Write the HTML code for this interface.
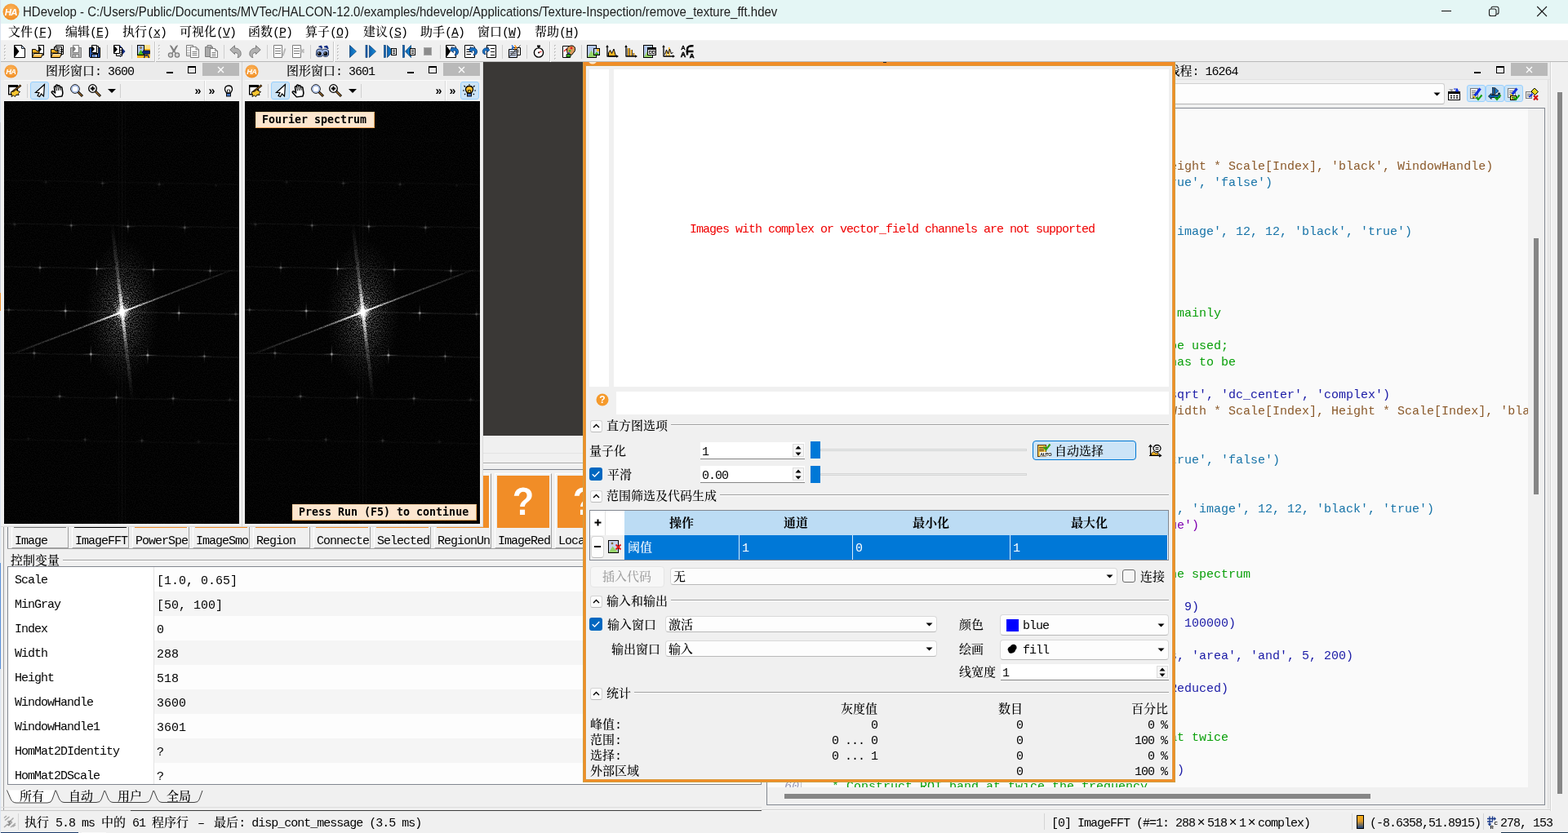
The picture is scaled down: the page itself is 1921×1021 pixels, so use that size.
<!DOCTYPE html>
<html lang="zh-CN"><head><meta charset="utf-8"><title>HDevelop</title>
<style>
html,body{margin:0;padding:0;background:#f0f0f0;overflow:hidden}
#root{will-change:transform;position:relative;width:1921px;height:1021px;overflow:hidden;background:#f0f0f0;color:#000}
#root div,#root svg{position:absolute;box-sizing:border-box}
#root span{position:static}
.u{font:500 15px/20px "Liberation Mono","Noto Serif CJK SC",serif;white-space:pre}
.l{letter-spacing:-1px}
.k{font:15px/20px "Liberation Mono",monospace;white-space:pre}
.t{font:15px/20px "Liberation Sans",sans-serif;white-space:pre}
.o{font:bold 13.3px/20px "DejaVu Sans Mono",monospace;white-space:pre}
.i{overflow:visible}
.x{display:inline-block;width:15px;text-align:center;font-size:17px;line-height:15px}
.x2{display:inline-block;width:9px;text-align:center;font-weight:bold;font-size:14px}
.x3{display:inline-block;width:15px;text-align:center}
</style></head>
<body>
<div id="root">
<svg width="0" height="0" style="left:0;top:0"><defs><filter id="nz" x="0" y="0" width="100%" height="100%" color-interpolation-filters="sRGB"><feTurbulence type="fractalNoise" baseFrequency="0.75" numOctaves="1" seed="7"/><feColorMatrix type="matrix" values="0 0 0 0 1  0 0 0 0 1  0 0 0 0 1  5 0 0 0 -2.1"/></filter><filter id="sp" x="-5%" y="-5%" width="110%" height="110%" color-interpolation-filters="sRGB"><feTurbulence type="fractalNoise" baseFrequency="0.85" numOctaves="1" seed="11" result="n"/><feColorMatrix in="n" type="matrix" values="0 0 0 0 1  0 0 0 0 1  0 0 0 0 1  4 0 0 0 -1.1" result="m"/><feComposite in="SourceGraphic" in2="m" operator="in"/></filter><radialGradient id="fg1" cx="144.7" cy="258.4" r="60" gradientUnits="userSpaceOnUse" gradientTransform="translate(144.7 258.4) scale(0.75 1.5) translate(-144.7 -258.4)"><stop offset="0" stop-color="#fff" stop-opacity="1"/><stop offset="0.1" stop-color="#fff" stop-opacity="0.7"/><stop offset="0.3" stop-color="#fff" stop-opacity="0.3"/><stop offset="0.7" stop-color="#fff" stop-opacity="0.11"/><stop offset="1" stop-color="#fff" stop-opacity="0.03"/></radialGradient><mask id="fm" maskUnits="userSpaceOnUse" x="0" y="0" width="288" height="518"><rect width="288" height="518" fill="url(#fg1)"/></mask><radialGradient id="fc"><stop offset="0" stop-color="#fff" stop-opacity="1"/><stop offset="0.35" stop-color="#fff" stop-opacity="0.75"/><stop offset="1" stop-color="#fff" stop-opacity="0"/></radialGradient><radialGradient id="fp"><stop offset="0" stop-color="#fff" stop-opacity="1"/><stop offset="0.3" stop-color="#fff" stop-opacity="0.5"/><stop offset="1" stop-color="#fff" stop-opacity="0"/></radialGradient><linearGradient id="fl" x1="0" x2="1" y1="0" y2="0"><stop offset="0" stop-color="#fff" stop-opacity="0"/><stop offset="0.3" stop-color="#fff" stop-opacity="0.25"/><stop offset="0.42" stop-color="#fff" stop-opacity="0.7"/><stop offset="0.5" stop-color="#fff" stop-opacity="1"/><stop offset="0.58" stop-color="#fff" stop-opacity="0.7"/><stop offset="0.7" stop-color="#fff" stop-opacity="0.25"/><stop offset="1" stop-color="#fff" stop-opacity="0"/></linearGradient><linearGradient id="fv" x1="0" x2="1" y1="0" y2="0"><stop offset="0" stop-color="#fff" stop-opacity="0"/><stop offset="0.5" stop-color="#fff" stop-opacity="1"/><stop offset="1" stop-color="#fff" stop-opacity="0"/></linearGradient><linearGradient id="fd" x1="0" x2="1" y1="0" y2="0"><stop offset="0" stop-color="#fff" stop-opacity="0"/><stop offset="0.08" stop-color="#fff" stop-opacity="0.1"/><stop offset="0.3" stop-color="#fff" stop-opacity="0.22"/><stop offset="0.4" stop-color="#fff" stop-opacity="0.5"/><stop offset="0.47" stop-color="#fff" stop-opacity="1"/><stop offset="0.53" stop-color="#fff" stop-opacity="1"/><stop offset="0.6" stop-color="#fff" stop-opacity="0.5"/><stop offset="0.7" stop-color="#fff" stop-opacity="0.22"/><stop offset="0.92" stop-color="#fff" stop-opacity="0.1"/><stop offset="1" stop-color="#fff" stop-opacity="0"/></linearGradient><g id="fftimg"><rect width="288" height="518" fill="#000"/><rect x="144.2" y="0" width="1" height="518" fill="#fff" opacity="0.05"/><rect x="140.2" y="0" width="1" height="518" fill="#fff" opacity="0.03"/><rect x="148.2" y="0" width="1" height="518" fill="#fff" opacity="0.03"/><rect width="288" height="518" fill="#fff" filter="url(#nz)" mask="url(#fm)"/><g filter="url(#sp)" opacity="0.009"><rect x="0" y="469.6" width="288" height="1.6" fill="#fff" transform="rotate(1.07 144.7 470.4)"/></g><g filter="url(#sp)" opacity="0.028"><rect x="0" y="416.6" width="288" height="1.6" fill="#fff" transform="rotate(1.07 144.7 417.4)"/></g><g filter="url(#sp)" opacity="0.046"><rect x="0" y="363.6" width="288" height="1.6" fill="#fff" transform="rotate(1.07 144.7 364.4)"/></g><g filter="url(#sp)" opacity="0.064"><rect x="0" y="310.6" width="288" height="1.6" fill="#fff" transform="rotate(1.07 144.7 311.4)"/></g><g filter="url(#sp)" opacity="0.083"><rect x="0" y="257.6" width="288" height="1.6" fill="#fff" transform="rotate(1.07 144.7 258.4)"/></g><g filter="url(#sp)" opacity="0.064"><rect x="0" y="204.6" width="288" height="1.6" fill="#fff" transform="rotate(1.07 144.7 205.4)"/></g><g filter="url(#sp)" opacity="0.046"><rect x="0" y="151.6" width="288" height="1.6" fill="#fff" transform="rotate(1.07 144.7 152.4)"/></g><g filter="url(#sp)" opacity="0.028"><rect x="0" y="98.6" width="288" height="1.6" fill="#fff" transform="rotate(1.07 144.7 99.4)"/></g><g filter="url(#sp)" opacity="0.009"><rect x="0" y="45.6" width="288" height="1.6" fill="#fff" transform="rotate(1.07 144.7 46.4)"/></g><g opacity="0.07" transform="translate(29.8 413.5)"><rect x="-6.7" y="-0.6" width="13.4" height="1.2" fill="url(#fv)" opacity="0.3"/><rect x="-0.6" y="0.0" width="1.2" height="0.0" fill="url(#fv)" opacity="0.55" transform="rotate(90) translate(0 0)"/><g transform="rotate(90)"><rect x="-6.0" y="-0.6" width="12.0" height="1.2" fill="url(#fv)" opacity="0.3"/></g><circle r="2.4" fill="url(#fp)"/></g><g opacity="0.14" transform="translate(-1.4 360.5)"><rect x="-7.3" y="-0.6" width="14.6" height="1.2" fill="url(#fv)" opacity="0.3"/><rect x="-0.6" y="0.0" width="1.2" height="0.0" fill="url(#fv)" opacity="0.55" transform="rotate(90) translate(0 0)"/><g transform="rotate(90)"><rect x="-6.6" y="-0.6" width="13.2" height="1.2" fill="url(#fv)" opacity="0.3"/></g><circle r="2.4" fill="url(#fp)"/></g><g opacity="0.21" transform="translate(99.3 414.8)"><rect x="-8.0" y="-0.6" width="16.1" height="1.2" fill="url(#fv)" opacity="0.3"/><rect x="-0.6" y="0.0" width="1.2" height="0.0" fill="url(#fv)" opacity="0.55" transform="rotate(90) translate(0 0)"/><g transform="rotate(90)"><rect x="-7.2" y="-0.6" width="14.5" height="1.2" fill="url(#fv)" opacity="0.3"/></g><circle r="2.4" fill="url(#fp)"/></g><g opacity="0.40" transform="translate(68.1 361.8)"><rect x="-9.8" y="-0.6" width="19.7" height="1.2" fill="url(#fv)" opacity="0.3"/><rect x="-0.6" y="0.0" width="1.2" height="0.0" fill="url(#fv)" opacity="0.55" transform="rotate(90) translate(0 0)"/><g transform="rotate(90)"><rect x="-8.9" y="-0.6" width="17.7" height="1.2" fill="url(#fv)" opacity="0.3"/></g><circle r="2.4" fill="url(#fp)"/></g><g opacity="0.46" transform="translate(36.9 308.8)"><rect x="-10.4" y="-0.6" width="20.8" height="1.2" fill="url(#fv)" opacity="0.3"/><rect x="-0.6" y="0.0" width="1.2" height="0.0" fill="url(#fv)" opacity="0.55" transform="rotate(90) translate(0 0)"/><g transform="rotate(90)"><rect x="-9.3" y="-0.6" width="18.7" height="1.2" fill="url(#fv)" opacity="0.3"/></g><circle r="2.4" fill="url(#fp)"/></g><g opacity="0.34" transform="translate(5.7 255.8)"><rect x="-9.3" y="-0.6" width="18.5" height="1.2" fill="url(#fv)" opacity="0.3"/><rect x="-0.6" y="0.0" width="1.2" height="0.0" fill="url(#fv)" opacity="0.55" transform="rotate(90) translate(0 0)"/><g transform="rotate(90)"><rect x="-8.3" y="-0.6" width="16.7" height="1.2" fill="url(#fv)" opacity="0.3"/></g><circle r="2.4" fill="url(#fp)"/></g><g opacity="0.23" transform="translate(168.8 416.1)"><rect x="-8.2" y="-0.6" width="16.4" height="1.2" fill="url(#fv)" opacity="0.3"/><rect x="-0.6" y="0.0" width="1.2" height="0.0" fill="url(#fv)" opacity="0.55" transform="rotate(90) translate(0 0)"/><g transform="rotate(90)"><rect x="-7.4" y="-0.6" width="14.8" height="1.2" fill="url(#fv)" opacity="0.3"/></g><circle r="2.4" fill="url(#fp)"/></g><g opacity="0.54" transform="translate(137.6 363.1)"><rect x="-11.2" y="-0.6" width="22.4" height="1.2" fill="url(#fv)" opacity="0.3"/><rect x="-0.6" y="0.0" width="1.2" height="0.0" fill="url(#fv)" opacity="0.55" transform="rotate(90) translate(0 0)"/><g transform="rotate(90)"><rect x="-10.1" y="-0.6" width="20.2" height="1.2" fill="url(#fv)" opacity="0.3"/></g><circle r="2.4" fill="url(#fp)"/></g><g opacity="0.80" transform="translate(106.4 310.1)"><rect x="-13.7" y="-0.6" width="27.4" height="1.2" fill="url(#fv)" opacity="0.3"/><rect x="-0.6" y="0.0" width="1.2" height="0.0" fill="url(#fv)" opacity="0.55" transform="rotate(90) translate(0 0)"/><g transform="rotate(90)"><rect x="-12.3" y="-0.6" width="24.6" height="1.2" fill="url(#fv)" opacity="0.3"/></g><circle r="2.4" fill="url(#fp)"/></g><g opacity="0.77" transform="translate(75.2 257.1)"><rect x="-13.4" y="-0.6" width="26.7" height="1.2" fill="url(#fv)" opacity="0.3"/><rect x="-0.6" y="0.0" width="1.2" height="0.0" fill="url(#fv)" opacity="0.55" transform="rotate(90) translate(0 0)"/><g transform="rotate(90)"><rect x="-12.0" y="-0.6" width="24.1" height="1.2" fill="url(#fv)" opacity="0.3"/></g><circle r="2.4" fill="url(#fp)"/></g><g opacity="0.48" transform="translate(44.0 204.1)"><rect x="-10.6" y="-0.6" width="21.3" height="1.2" fill="url(#fv)" opacity="0.3"/><rect x="-0.6" y="0.0" width="1.2" height="0.0" fill="url(#fv)" opacity="0.55" transform="rotate(90) translate(0 0)"/><g transform="rotate(90)"><rect x="-9.6" y="-0.6" width="19.2" height="1.2" fill="url(#fv)" opacity="0.3"/></g><circle r="2.4" fill="url(#fp)"/></g><g opacity="0.18" transform="translate(12.8 151.1)"><rect x="-7.7" y="-0.6" width="15.4" height="1.2" fill="url(#fv)" opacity="0.3"/><rect x="-0.6" y="0.0" width="1.2" height="0.0" fill="url(#fv)" opacity="0.55" transform="rotate(90) translate(0 0)"/><g transform="rotate(90)"><rect x="-6.9" y="-0.6" width="13.9" height="1.2" fill="url(#fv)" opacity="0.3"/></g><circle r="2.4" fill="url(#fp)"/></g><g opacity="0.11" transform="translate(238.3 417.4)"><rect x="-7.0" y="-0.6" width="14.1" height="1.2" fill="url(#fv)" opacity="0.3"/><rect x="-0.6" y="0.0" width="1.2" height="0.0" fill="url(#fv)" opacity="0.55" transform="rotate(90) translate(0 0)"/><g transform="rotate(90)"><rect x="-6.3" y="-0.6" width="12.7" height="1.2" fill="url(#fv)" opacity="0.3"/></g><circle r="2.4" fill="url(#fp)"/></g><g opacity="0.43" transform="translate(207.1 364.4)"><rect x="-10.2" y="-0.6" width="20.3" height="1.2" fill="url(#fv)" opacity="0.3"/><rect x="-0.6" y="0.0" width="1.2" height="0.0" fill="url(#fv)" opacity="0.55" transform="rotate(90) translate(0 0)"/><g transform="rotate(90)"><rect x="-9.1" y="-0.6" width="18.3" height="1.2" fill="url(#fv)" opacity="0.3"/></g><circle r="2.4" fill="url(#fp)"/></g><g opacity="0.82" transform="translate(175.9 311.4)"><rect x="-13.9" y="-0.6" width="27.8" height="1.2" fill="url(#fv)" opacity="0.3"/><rect x="-0.6" y="0.0" width="1.2" height="0.0" fill="url(#fv)" opacity="0.55" transform="rotate(90) translate(0 0)"/><g transform="rotate(90)"><rect x="-12.5" y="-0.6" width="25.0" height="1.2" fill="url(#fv)" opacity="0.3"/></g><circle r="2.4" fill="url(#fp)"/></g><g opacity="0.82" transform="translate(113.5 205.4)"><rect x="-13.9" y="-0.6" width="27.8" height="1.2" fill="url(#fv)" opacity="0.3"/><rect x="-0.6" y="0.0" width="1.2" height="0.0" fill="url(#fv)" opacity="0.55" transform="rotate(90) translate(0 0)"/><g transform="rotate(90)"><rect x="-12.5" y="-0.6" width="25.0" height="1.2" fill="url(#fv)" opacity="0.3"/></g><circle r="2.4" fill="url(#fp)"/></g><g opacity="0.43" transform="translate(82.3 152.4)"><rect x="-10.2" y="-0.6" width="20.3" height="1.2" fill="url(#fv)" opacity="0.3"/><rect x="-0.6" y="0.0" width="1.2" height="0.0" fill="url(#fv)" opacity="0.55" transform="rotate(90) translate(0 0)"/><g transform="rotate(90)"><rect x="-9.1" y="-0.6" width="18.3" height="1.2" fill="url(#fv)" opacity="0.3"/></g><circle r="2.4" fill="url(#fp)"/></g><g opacity="0.11" transform="translate(51.1 99.4)"><rect x="-7.0" y="-0.6" width="14.1" height="1.2" fill="url(#fv)" opacity="0.3"/><rect x="-0.6" y="0.0" width="1.2" height="0.0" fill="url(#fv)" opacity="0.55" transform="rotate(90) translate(0 0)"/><g transform="rotate(90)"><rect x="-6.3" y="-0.6" width="12.7" height="1.2" fill="url(#fv)" opacity="0.3"/></g><circle r="2.4" fill="url(#fp)"/></g><g opacity="0.18" transform="translate(276.6 365.7)"><rect x="-7.7" y="-0.6" width="15.4" height="1.2" fill="url(#fv)" opacity="0.3"/><rect x="-0.6" y="0.0" width="1.2" height="0.0" fill="url(#fv)" opacity="0.55" transform="rotate(90) translate(0 0)"/><g transform="rotate(90)"><rect x="-6.9" y="-0.6" width="13.9" height="1.2" fill="url(#fv)" opacity="0.3"/></g><circle r="2.4" fill="url(#fp)"/></g><g opacity="0.48" transform="translate(245.4 312.7)"><rect x="-10.6" y="-0.6" width="21.3" height="1.2" fill="url(#fv)" opacity="0.3"/><rect x="-0.6" y="0.0" width="1.2" height="0.0" fill="url(#fv)" opacity="0.55" transform="rotate(90) translate(0 0)"/><g transform="rotate(90)"><rect x="-9.6" y="-0.6" width="19.2" height="1.2" fill="url(#fv)" opacity="0.3"/></g><circle r="2.4" fill="url(#fp)"/></g><g opacity="0.77" transform="translate(214.2 259.7)"><rect x="-13.4" y="-0.6" width="26.7" height="1.2" fill="url(#fv)" opacity="0.3"/><rect x="-0.6" y="0.0" width="1.2" height="0.0" fill="url(#fv)" opacity="0.55" transform="rotate(90) translate(0 0)"/><g transform="rotate(90)"><rect x="-12.0" y="-0.6" width="24.1" height="1.2" fill="url(#fv)" opacity="0.3"/></g><circle r="2.4" fill="url(#fp)"/></g><g opacity="0.80" transform="translate(183.0 206.7)"><rect x="-13.7" y="-0.6" width="27.4" height="1.2" fill="url(#fv)" opacity="0.3"/><rect x="-0.6" y="0.0" width="1.2" height="0.0" fill="url(#fv)" opacity="0.55" transform="rotate(90) translate(0 0)"/><g transform="rotate(90)"><rect x="-12.3" y="-0.6" width="24.6" height="1.2" fill="url(#fv)" opacity="0.3"/></g><circle r="2.4" fill="url(#fp)"/></g><g opacity="0.54" transform="translate(151.8 153.7)"><rect x="-11.2" y="-0.6" width="22.4" height="1.2" fill="url(#fv)" opacity="0.3"/><rect x="-0.6" y="0.0" width="1.2" height="0.0" fill="url(#fv)" opacity="0.55" transform="rotate(90) translate(0 0)"/><g transform="rotate(90)"><rect x="-10.1" y="-0.6" width="20.2" height="1.2" fill="url(#fv)" opacity="0.3"/></g><circle r="2.4" fill="url(#fp)"/></g><g opacity="0.23" transform="translate(120.6 100.7)"><rect x="-8.2" y="-0.6" width="16.4" height="1.2" fill="url(#fv)" opacity="0.3"/><rect x="-0.6" y="0.0" width="1.2" height="0.0" fill="url(#fv)" opacity="0.55" transform="rotate(90) translate(0 0)"/><g transform="rotate(90)"><rect x="-7.4" y="-0.6" width="14.8" height="1.2" fill="url(#fv)" opacity="0.3"/></g><circle r="2.4" fill="url(#fp)"/></g><g opacity="0.34" transform="translate(283.7 261.0)"><rect x="-9.3" y="-0.6" width="18.5" height="1.2" fill="url(#fv)" opacity="0.3"/><rect x="-0.6" y="0.0" width="1.2" height="0.0" fill="url(#fv)" opacity="0.55" transform="rotate(90) translate(0 0)"/><g transform="rotate(90)"><rect x="-8.3" y="-0.6" width="16.7" height="1.2" fill="url(#fv)" opacity="0.3"/></g><circle r="2.4" fill="url(#fp)"/></g><g opacity="0.46" transform="translate(252.5 208.0)"><rect x="-10.4" y="-0.6" width="20.8" height="1.2" fill="url(#fv)" opacity="0.3"/><rect x="-0.6" y="0.0" width="1.2" height="0.0" fill="url(#fv)" opacity="0.55" transform="rotate(90) translate(0 0)"/><g transform="rotate(90)"><rect x="-9.3" y="-0.6" width="18.7" height="1.2" fill="url(#fv)" opacity="0.3"/></g><circle r="2.4" fill="url(#fp)"/></g><g opacity="0.40" transform="translate(221.3 155.0)"><rect x="-9.8" y="-0.6" width="19.7" height="1.2" fill="url(#fv)" opacity="0.3"/><rect x="-0.6" y="0.0" width="1.2" height="0.0" fill="url(#fv)" opacity="0.55" transform="rotate(90) translate(0 0)"/><g transform="rotate(90)"><rect x="-8.9" y="-0.6" width="17.7" height="1.2" fill="url(#fv)" opacity="0.3"/></g><circle r="2.4" fill="url(#fp)"/></g><g opacity="0.21" transform="translate(190.1 102.0)"><rect x="-8.0" y="-0.6" width="16.1" height="1.2" fill="url(#fv)" opacity="0.3"/><rect x="-0.6" y="0.0" width="1.2" height="0.0" fill="url(#fv)" opacity="0.55" transform="rotate(90) translate(0 0)"/><g transform="rotate(90)"><rect x="-7.2" y="-0.6" width="14.5" height="1.2" fill="url(#fv)" opacity="0.3"/></g><circle r="2.4" fill="url(#fp)"/></g><g opacity="0.14" transform="translate(290.8 156.3)"><rect x="-7.3" y="-0.6" width="14.6" height="1.2" fill="url(#fv)" opacity="0.3"/><rect x="-0.6" y="0.0" width="1.2" height="0.0" fill="url(#fv)" opacity="0.55" transform="rotate(90) translate(0 0)"/><g transform="rotate(90)"><rect x="-6.6" y="-0.6" width="13.2" height="1.2" fill="url(#fv)" opacity="0.3"/></g><circle r="2.4" fill="url(#fp)"/></g><g opacity="0.07" transform="translate(259.6 103.3)"><rect x="-6.7" y="-0.6" width="13.4" height="1.2" fill="url(#fv)" opacity="0.3"/><rect x="-0.6" y="0.0" width="1.2" height="0.0" fill="url(#fv)" opacity="0.55" transform="rotate(90) translate(0 0)"/><g transform="rotate(90)"><rect x="-6.0" y="-0.6" width="12.0" height="1.2" fill="url(#fv)" opacity="0.3"/></g><circle r="2.4" fill="url(#fp)"/></g><g filter="url(#sp)"><g transform="translate(144.7 258.4) rotate(83.44)"><rect x="-110" y="-2" width="220" height="4" fill="url(#fl)"/></g></g><g transform="translate(144.7 258.4) rotate(83.44)"><rect x="-45" y="-0.9" width="90" height="1.8" fill="url(#fl)" opacity="0.9"/></g><g filter="url(#sp)"><g transform="translate(144.7 258.4) rotate(-20.96)"><rect x="-150" y="-1" width="300" height="2" fill="url(#fd)"/></g></g><g transform="translate(144.7 258.4) rotate(-20.96)"><rect x="-150" y="-0.5" width="300" height="1" fill="url(#fd)" opacity="0.5"/><rect x="-40" y="-0.9" width="80" height="1.8" fill="url(#fl)" opacity="0.8"/></g><circle cx="144.7" cy="258.4" r="9" fill="url(#fc)"/><ellipse cx="144.7" cy="258.4" rx="3" ry="4" fill="#fff"/></g></defs></svg>
<div style="left:0px;top:0px;width:1921px;height:29px;background:#e4f6f5;"></div>
<svg style="left:3px;top:3.5px" width="21" height="21" viewBox="0 0 21 21"><defs><radialGradient id="hag" cx="0.5" cy="0.35" r="0.7"><stop offset="0" stop-color="#fbb45c"/><stop offset="1" stop-color="#f08a1e"/></radialGradient></defs><circle cx="10.5" cy="10.5" r="10" fill="url(#hag)"/><text x="10.3" y="14.6" font-family="Liberation Sans,sans-serif" font-size="11.5" font-weight="bold" font-style="italic" fill="#fff" text-anchor="middle" letter-spacing="-0.8">HA</text></svg>
<div class="t" style="top:5px;left:28px;color:#1b1b1b;transform:scaleY(1.07);transform-origin:0 15px;">HDevelop - C:/Users/Public/Documents/MVTec/HALCON-12.0/examples/hdevelop/Applications/Texture-Inspection/remove_texture_fft.hdev</div>
<svg style="left:1760px;top:0" width="161" height="29" viewBox="0 0 161 29" fill="none" stroke="#1a1a1a" stroke-width="1.1"><path d="M6 13.5h12"/><rect x="64.5" y="11" width="8.5" height="8.5" rx="2"/><path d="M67 10.500v-0.200a2 2 0 0 1 2-2h4.800a2.200 2.200 0 0 1 2.200 2.200v4.800a2 2 0 0 1-2 2h-0.500"/><path d="M123.200 8l11.800 12M135 8l-11.800 12"/></svg>
<div style="left:0px;top:29px;width:1921px;height:21px;background:#ffffff;"></div>
<div style="left:0px;top:49px;width:1921px;height:1px;background:#f4f4f4;"></div>
<div class="u" style="top:31px;left:10px;">文件<span class="l">(F)</span></div>
<div style="left:48px;top:45px;width:8px;height:1px;background:#000;"></div>
<div class="u" style="top:31px;left:80px;">编辑<span class="l">(E)</span></div>
<div style="left:118px;top:45px;width:8px;height:1px;background:#000;"></div>
<div class="u" style="top:31px;left:150px;">执行<span class="l">(x)</span></div>
<div style="left:188px;top:45px;width:8px;height:1px;background:#000;"></div>
<div class="u" style="top:31px;left:220px;">可视化<span class="l">(V)</span></div>
<div style="left:273px;top:45px;width:8px;height:1px;background:#000;"></div>
<div class="u" style="top:31px;left:304px;">函数<span class="l">(P)</span></div>
<div style="left:342px;top:45px;width:8px;height:1px;background:#000;"></div>
<div class="u" style="top:31px;left:374px;">算子<span class="l">(O)</span></div>
<div style="left:412px;top:45px;width:8px;height:1px;background:#000;"></div>
<div class="u" style="top:31px;left:445px;">建议<span class="l">(S)</span></div>
<div style="left:483px;top:45px;width:8px;height:1px;background:#000;"></div>
<div class="u" style="top:31px;left:515px;">助手<span class="l">(A)</span></div>
<div style="left:553px;top:45px;width:8px;height:1px;background:#000;"></div>
<div class="u" style="top:31px;left:585px;">窗口<span class="l">(W)</span></div>
<div style="left:623px;top:45px;width:8px;height:1px;background:#000;"></div>
<div class="u" style="top:31px;left:655px;">帮助<span class="l">(H)</span></div>
<div style="left:693px;top:45px;width:8px;height:1px;background:#000;"></div>
<div style="left:0px;top:50px;width:1921px;height:26px;background:#f0f0f0;"></div>
<div style="left:0px;top:75px;width:1921px;height:1px;background:#b9b9b9;"></div>
<div style="left:5px;top:55px;width:2px;height:2px;background:#c3c3c3;"></div>
<div style="left:6px;top:56px;width:1px;height:1px;background:#fff;"></div>
<div style="left:5px;top:59px;width:2px;height:2px;background:#c3c3c3;"></div>
<div style="left:6px;top:60px;width:1px;height:1px;background:#fff;"></div>
<div style="left:5px;top:63px;width:2px;height:2px;background:#c3c3c3;"></div>
<div style="left:6px;top:64px;width:1px;height:1px;background:#fff;"></div>
<div style="left:5px;top:67px;width:2px;height:2px;background:#c3c3c3;"></div>
<div style="left:6px;top:68px;width:1px;height:1px;background:#fff;"></div>
<div style="left:5px;top:71px;width:2px;height:2px;background:#c3c3c3;"></div>
<div style="left:6px;top:72px;width:1px;height:1px;background:#fff;"></div>
<svg class="i" style="left:16px;top:55px" width="16" height="16" viewBox="0 0 16 16"><path d="M1.5 0.5H10.5L14.5 4.5V15.5H1.5Z" fill="#fff" stroke="#000" stroke-width="1"/><path d="M10.5 0.5V4.5H14.5Z" fill="#b4c8e6" stroke="#000" stroke-width="0.8"/><path d="M2 1L7.5 8L2 15Z" fill="#000"/></svg>
<svg class="i" style="left:39px;top:55px" width="16" height="16" viewBox="0 0 16 16"><defs><linearGradient id="fo" x1="0" y1="0" x2="0" y2="1"><stop offset="0" stop-color="#fde9bc"/><stop offset="1" stop-color="#f7a818"/></linearGradient></defs><path d="M7.500 0.500H14.500V12.500H11" fill="#fff" stroke="#000"/><path d="M7.500 0.500V9.500H14" fill="#fff"/><path d="M8 0.800L12 5.500L8 9.500Z" fill="#000"/><path d="M7.500 0.500H14.500V12.500H12.500" fill="none" stroke="#000"/><path d="M0.500 5.500H4.500L6 7.500H9V10H0.500Z" fill="#f9b021" stroke="#000"/><path d="M0.500 15.500L2.500 10.500H13.500L11.500 15.500Z" fill="url(#fo)" stroke="#000"/><path d="M0.500 7V15.500" stroke="#000"/></svg>
<svg class="i" style="left:62px;top:55px" width="16" height="16" viewBox="0 0 16 16"><path d="M6.500 0.500H15.500V11.500H6.500Z" fill="#fff" stroke="#000"/><path d="M4.500 2.500H13.500V12.500H4.500Z" fill="#e8e8e8" stroke="#000"/><rect x="5" y="3" width="3" height="7" fill="#9a9a9a"/><text x="7.300" y="9.200" font-family="Liberation Sans,sans-serif" font-size="6.500" font-weight="bold" fill="#000">Ex</text><path d="M0.500 5.500H4.500L6 7.500H9V10H0.500Z" fill="#f9b021" stroke="#000"/><path d="M0.500 15.500L2.500 10.500H13.500L11.500 15.500Z" fill="url(#fo)" stroke="#000"/><path d="M0.500 7V15.500" stroke="#000"/></svg>
<svg class="i" style="left:85px;top:55px" width="16" height="16" viewBox="0 0 16 16"><path d="M1.500 3.500H14.500V15.500H2.500L1.500 14.500Z" fill="#b5b5b5" stroke="#7d7d7d"/><rect x="4.500" y="11.500" width="7" height="4" fill="#dcdcdc" stroke="#7d7d7d"/><rect x="6" y="12.500" width="2" height="2" fill="#7d7d7d"/><path d="M4.500 0.500H11.500V9.500H4.500Z" fill="#fff" stroke="#7d7d7d"/><path d="M5 1.500L8 5L5 8.500Z" fill="#7d7d7d"/></svg>
<svg class="i" style="left:108px;top:55px" width="16" height="16" viewBox="0 0 16 16"><path d="M1.500 3.500H14.500V15.500H2.500L1.500 14.500Z" fill="#2a56a8" stroke="#000"/><rect x="4.500" y="11.500" width="7" height="4" fill="#a9bfe6" stroke="#000"/><rect x="6" y="12.500" width="2.500" height="2" fill="#2a56a8"/><path d="M6.500 1.500H12.500V10.500H6.500Z" fill="#fff" stroke="#000"/><path d="M4.500 0.500H10.500V9.500H4.500Z" fill="#fff" stroke="#000"/><path d="M5 1.500L8 5L5 8.500Z" fill="#000"/></svg>
<div style="left:131px;top:55px;width:1px;height:17px;background:#cfcfcf;"></div>
<svg class="i" style="left:138px;top:55px" width="16" height="16" viewBox="0 0 16 16"><path d="M9 0.500L15.500 8L9 15.500Z" fill="#0c2a80"/><path d="M4.500 3.500H11.500V13.500H4.500Z" fill="#fff" stroke="#000"/><path d="M1.500 0.500H8.500V10.500H1.500Z" fill="#fff" stroke="#000"/><path d="M2 1L6 5.500L2 10Z" fill="#000"/><path d="M9 6.500h2.500M9 9h2.500M9 11.500h2.500" stroke="#000"/></svg>
<div style="left:161px;top:55px;width:1px;height:17px;background:#cfcfcf;"></div>
<svg class="i" style="left:168px;top:55px" width="16" height="16" viewBox="0 0 16 16"><rect x="0" y="0" width="16" height="16" fill="#fdb824"/><rect x="9" y="0" width="7" height="5" fill="#fde18a"/><rect x="0.500" y="0.500" width="8" height="12" fill="#aec3e8" stroke="#000"/><path d="M1 12L4.500 6L7 9.500L8.500 12Z" fill="#42b418"/><circle cx="4.500" cy="3.500" r="1" fill="#fdb824" stroke="#000" stroke-width="0.500"/><rect x="7.500" y="7" width="8" height="4" fill="#0c2a80" stroke="#000" stroke-width="0.600"/><rect x="6" y="8" width="2" height="2" fill="#0c2a80"/><path d="M10 11.500L8.500 16M12.500 11.500L14.500 16M11.300 11.500V14" stroke="#0a1c50" stroke-width="1.300" fill="none"/></svg>
<svg class="i" style="left:205px;top:55px" width="16" height="16" viewBox="0 0 16 16"><path d="M3.500 0.500L8 8.500L12.500 0.500" fill="none" stroke="#7c7c7c" stroke-width="1.400"/><path d="M5 1.500L10.500 11M11 1.500L5.500 11" fill="none" stroke="#7c7c7c" stroke-width="1.200"/><circle cx="4" cy="12.500" r="2.600" fill="#d9d9d9" stroke="#7c7c7c" stroke-width="1.300"/><circle cx="12" cy="12.500" r="2.600" fill="#d9d9d9" stroke="#7c7c7c" stroke-width="1.300"/></svg>
<svg class="i" style="left:228px;top:55px" width="16" height="16" viewBox="0 0 16 16"><path d="M0.500 0.500H8.500V13.500H0.500Z" fill="#f4f4f4" stroke="#7c7c7c"/><path d="M1 3.5H5" stroke="#bdbdbd" stroke-width="1"/><path d="M1 6.5H5" stroke="#bdbdbd" stroke-width="1"/><path d="M1 9.5H5" stroke="#bdbdbd" stroke-width="1"/><path d="M1 11.5H5" stroke="#bdbdbd" stroke-width="1"/><path d="M5.5 2.5H12.0L15.5 6.0V15.5H5.5Z" fill="#fff" stroke="#7c7c7c" stroke-width="1"/><path d="M12.0 2.5V6.0H15.5Z" fill="#d0d0d0" stroke="#7c7c7c" stroke-width="0.8"/><path d="M7.5 8.5H13.5" stroke="#7c7c7c" stroke-width="1"/><path d="M7.5 10.5H13.5" stroke="#7c7c7c" stroke-width="1"/><path d="M7.5 12.5H13.5" stroke="#7c7c7c" stroke-width="1"/></svg>
<svg class="i" style="left:251px;top:55px" width="16" height="16" viewBox="0 0 16 16"><path d="M0.500 2.500H9.500V14.500H0.500Z" fill="#ababab" stroke="#7c7c7c"/><path d="M3 0.500H8V3H3Z" fill="#cfcfcf" stroke="#7c7c7c"/><path d="M6.5 4.5H12.5L15.5 7.5V15.5H6.5Z" fill="#fff" stroke="#7c7c7c" stroke-width="1"/><path d="M12.5 4.5V7.5H15.5Z" fill="#d0d0d0" stroke="#7c7c7c" stroke-width="0.8"/><path d="M8.5 9.5H13.5" stroke="#7c7c7c" stroke-width="1"/><path d="M8.5 11.5H13.5" stroke="#7c7c7c" stroke-width="1"/><path d="M8.5 13.5H13.5" stroke="#7c7c7c" stroke-width="1"/></svg>
<div style="left:274px;top:55px;width:1px;height:17px;background:#cfcfcf;"></div>
<svg class="i" style="left:281px;top:55px" width="16" height="16" viewBox="0 0 16 16"><path d="M0.800 6L6.500 0.800V4C11.500 4 15 7.500 14 12.500C13.500 14.500 11.500 15.500 10 15.500C11.500 13 11 9.500 6.500 9.500V11.500Z" fill="#b1b1b1" stroke="#7c7c7c" stroke-width="1" stroke-linejoin="round"/></svg>
<svg class="i" style="left:304px;top:55px" width="16" height="16" viewBox="0 0 16 16"><g transform="translate(16 0) scale(-1 1)"><path d="M0.800 6L6.500 0.800V4C11.500 4 15 7.500 14 12.500C13.500 14.500 11.500 15.500 10 15.500C11.500 13 11 9.500 6.500 9.500V11.500Z" fill="#b1b1b1" stroke="#7c7c7c" stroke-width="1" stroke-linejoin="round"/></g></svg>
<div style="left:327px;top:55px;width:1px;height:17px;background:#cfcfcf;"></div>
<svg class="i" style="left:334px;top:55px" width="16" height="16" viewBox="0 0 16 16"><path d="M1.500 0.500H11.500V15.500H1.500Z" fill="#fff" stroke="#7c7c7c"/><path d="M3 4.5H10" stroke="#7c7c7c" stroke-width="1"/><path d="M3 7.5H10" stroke="#7c7c7c" stroke-width="1"/><path d="M3 10.5H10" stroke="#7c7c7c" stroke-width="1"/><path d="M12.500 13.500L15.500 4.500" stroke="#b9b9b9" stroke-width="2"/></svg>
<svg class="i" style="left:357px;top:55px" width="16" height="16" viewBox="0 0 16 16"><path d="M1.500 0.500H11.500V15.500H1.500Z" fill="#fff" stroke="#7c7c7c"/><path d="M3 4.5H10" stroke="#7c7c7c" stroke-width="1"/><path d="M3 7.5H10" stroke="#7c7c7c" stroke-width="1"/><path d="M3 10.5H10" stroke="#7c7c7c" stroke-width="1"/><path d="M11.500 5.500L15.500 9.500M15.500 5.500L11.500 9.500M9 7.500H14" stroke="#b9b9b9" stroke-width="1.800"/></svg>
<div style="left:380px;top:55px;width:1px;height:17px;background:#cfcfcf;"></div>
<svg class="i" style="left:387px;top:55px" width="16" height="16" viewBox="0 0 16 16"><path d="M3.500 2.500L6.500 1.500L7.500 4.500M10 2.500L13.500 1.500L15 5" fill="#0c2a80" stroke="#0c2a80" stroke-width="1.600" stroke-linejoin="round"/><path d="M1 7C1 4.500 7.500 4.500 8 6.500C8.500 4.500 15.500 4.500 15.500 8V12C15.500 15 9 15 8.500 12.500C8 15 0.500 15.500 0.500 12Z" fill="#9bb3e0" stroke="#10224e" stroke-width="1"/><circle cx="4.200" cy="10.800" r="2.500" fill="#000"/><circle cx="11.800" cy="10.800" r="2.500" fill="#000"/><circle cx="3.400" cy="10" r="0.700" fill="#fff"/><circle cx="11" cy="10" r="0.700" fill="#fff"/></svg>
<svg class="i" style="left:425px;top:55px" width="16" height="16" viewBox="0 0 16 16"><defs><linearGradient id="bl" x1="0" y1="0" x2="1" y2="0"><stop offset="0" stop-color="#0b5fae"/><stop offset="1" stop-color="#1b8fd9"/></linearGradient></defs><path d="M3.5 0.500L11.5 8L3.5 15.500Z" fill="url(#bl)" stroke="#053a6e" stroke-width="0.700"/></svg>
<svg class="i" style="left:447px;top:55px" width="16" height="16" viewBox="0 0 16 16"><rect x="1" y="0.500" width="2" height="15" fill="#0b5fae" stroke="#053a6e" stroke-width="0.600"/><path d="M5.5 0.500L13.5 8L5.5 15.500Z" fill="url(#bl)" stroke="#053a6e" stroke-width="0.700"/></svg>
<svg class="i" style="left:470px;top:55px" width="16" height="16" viewBox="0 0 16 16"><rect x="0.5" y="0.500" width="2" height="15" fill="#0b5fae" stroke="#053a6e" stroke-width="0.600"/><path d="M4.5 0.500L11.5 8L4.5 15.500Z" fill="url(#bl)" stroke="#053a6e" stroke-width="0.700"/><rect x="9.5" y="4.500" width="6" height="8" fill="#fff" stroke="#000"/><path d="M11.0 6.5H14.0" stroke="#000" stroke-width="1"/><path d="M11.0 8.5H14.0" stroke="#000" stroke-width="1"/><path d="M11.0 10.5H14.0" stroke="#000" stroke-width="1"/></svg>
<svg class="i" style="left:493px;top:55px" width="16" height="16" viewBox="0 0 16 16"><rect x="0.5" y="0.500" width="2" height="15" fill="#0b5fae" stroke="#053a6e" stroke-width="0.600"/><path d="M10.5 0.500L3.5 8L10.5 15.500Z" fill="url(#bl)" stroke="#053a6e" stroke-width="0.700"/><rect x="9.5" y="4.500" width="6" height="8" fill="#fff" stroke="#000"/><path d="M11.0 6.5H14.0" stroke="#000" stroke-width="1"/><path d="M11.0 8.5H14.0" stroke="#000" stroke-width="1"/><path d="M11.0 10.5H14.0" stroke="#000" stroke-width="1"/></svg>
<svg class="i" style="left:516px;top:55px" width="16" height="16" viewBox="0 0 16 16"><rect x="3.500" y="3.500" width="9" height="9" fill="#8c8c8c" stroke="#a8a8a8"/></svg>
<div style="left:539px;top:55px;width:1px;height:17px;background:#cfcfcf;"></div>
<svg class="i" style="left:546px;top:55px" width="16" height="16" viewBox="0 0 16 16"><path d="M0.500 0.500H10.500L12.500 2.500V15.500H0.500Z" fill="#fff" stroke="#000"/><path d="M1 1L6 8L1 15Z" fill="#000"/><path d="M7.500 4.500C11.500 1.500 16 5 15.500 9C15 12 12.500 13 11 12.500L12.500 9.500C13 7.500 11 6 9 7.500L9.500 9.500L5.500 6.500L8 2Z" fill="#1874c8" stroke="#052a5e" stroke-width="0.800" stroke-linejoin="round"/></svg>
<svg class="i" style="left:569px;top:55px" width="16" height="16" viewBox="0 0 16 16"><path d="M0.500 0.500H10.500L12.500 2.500V15.500H0.500Z" fill="#fff" stroke="#000"/><path d="M2.5 5.5H8" stroke="#000" stroke-width="1"/><path d="M2.5 8.5H8" stroke="#000" stroke-width="1"/><path d="M2.5 11.5H8" stroke="#000" stroke-width="1"/><path d="M7.500 4.500C11.500 1.500 16 5 15.500 9C15 12 12.500 13 11 12.500L12.500 9.500C13 7.500 11 6 9 7.500L9.500 9.500L5.500 6.500L8 2Z" fill="#1874c8" stroke="#052a5e" stroke-width="0.800" stroke-linejoin="round"/></svg>
<svg class="i" style="left:592px;top:55px" width="16" height="16" viewBox="0 0 16 16"><path d="M4.500 0.500H15.500V15.500H4.500Z" fill="#fff" stroke="#000"/><path d="M9 4.5H14" stroke="#000" stroke-width="1"/><path d="M9 8.5H14" stroke="#000" stroke-width="1"/><path d="M9 12.5H14" stroke="#000" stroke-width="1"/><g transform="translate(12.500 1) scale(-0.850 0.850)"><path d="M7.500 4.500C11.500 1.500 16 5 15.500 9C15 12 12.500 13 11 12.500L12.500 9.500C13 7.500 11 6 9 7.500L9.500 9.500L5.500 6.500L8 2Z" fill="#1874c8" stroke="#052a5e" stroke-width="0.800" stroke-linejoin="round"/></g></svg>
<div style="left:615px;top:55px;width:1px;height:17px;background:#cfcfcf;"></div>
<svg class="i" style="left:622px;top:55px" width="16" height="16" viewBox="0 0 16 16"><path d="M5.500 3.500H15.500V12.500H5.500Z" fill="#fff" stroke="#000"/><path d="M1.500 5.500H11.500V15.500H1.500Z" fill="#c8d4ee" stroke="#000"/><path d="M3 8.5H10" stroke="#4a4a4a" stroke-width="1"/><path d="M3 10.5H10" stroke="#4a4a4a" stroke-width="1"/><path d="M3 12.5H10" stroke="#4a4a4a" stroke-width="1"/><path d="M8 6.5H14" stroke="#4a4a4a" stroke-width="1"/><path d="M8 8.5H14" stroke="#4a4a4a" stroke-width="1"/><path d="M5 0.500L7 3L5 5.500" fill="none" stroke="#1b6fe0" stroke-width="1.500"/><path d="M8.500 0.500L10.500 3L8.500 5.500" fill="none" stroke="#f59018" stroke-width="1.500"/><path d="M1 15.500L15.500 0.500" stroke="#333" stroke-width="0.900"/></svg>
<div style="left:645px;top:55px;width:1px;height:17px;background:#cfcfcf;"></div>
<svg class="i" style="left:652px;top:55px" width="16" height="16" viewBox="0 0 16 16"><rect x="6" y="0.500" width="4" height="2" fill="#000"/><path d="M8 2V4" stroke="#000" stroke-width="1.500"/><circle cx="8" cy="9.500" r="5.600" fill="#fff" stroke="#000" stroke-width="1.400"/><path d="M8 9.500L11.500 8" stroke="#e02020" stroke-width="1.300"/><circle cx="8" cy="9.500" r="1" fill="#000"/></svg>
<svg class="i" style="left:689px;top:55px" width="16" height="16" viewBox="0 0 16 16"><path d="M0.500 1.500H9.500V15.500H0.500Z" fill="#fff" stroke="#000"/><path d="M2 8L5 5" stroke="#e02020" stroke-width="1.500"/><path d="M5.500 6C5.500 2.500 9 0.800 12 1C15 1.200 16 4 15.500 6.500C15 9 13 9.500 12.500 11C12 13 8.500 12.500 7 11C5.800 9.800 5.500 8 5.500 6Z" fill="#d99a5a" stroke="#000" stroke-width="1"/><circle cx="11" cy="4" r="1.400" fill="#e02020"/><circle cx="9" cy="7.300" r="1.300" fill="#3cb020"/><circle cx="8" cy="10" r="1" fill="#1840c0"/><path d="M5 11.500H10V15H5Z" fill="#3cb020" stroke="#000" stroke-width="0.800"/></svg>
<div style="left:712px;top:55px;width:1px;height:17px;background:#cfcfcf;"></div>
<svg class="i" style="left:719px;top:55px" width="16" height="16" viewBox="0 0 16 16"><rect x="0.5" y="0.5" width="11" height="15" fill="#b4c8ea" stroke="#000" stroke-width="1"/><path d="M1.0 15.0L5.45 6.8L11.0 15.0Z" fill="#96d468"/><rect x="8.500" y="4.500" width="7" height="8" fill="#b4c8ea" stroke="#000"/><rect x="12" y="5" width="3" height="3" fill="#fdb824"/><path d="M9 12L12 8.500L15 12Z" fill="#42b418"/></svg>
<svg class="i" style="left:742px;top:55px" width="16" height="16" viewBox="0 0 16 16"><path d="M3.500 14V10L5.500 6.500L7.500 10.500L10 5L12.500 14Z" fill="#fdb824" stroke="#000" stroke-width="1"/><path d="M2 14V1.500M1.500 14H14" fill="none" stroke="#000" stroke-width="1.300"/><path d="M0.300 3L2 0L3.700 3Z M13 12.300L16 14L13 15.700Z" fill="#000"/></svg>
<svg class="i" style="left:765px;top:55px" width="16" height="16" viewBox="0 0 16 16"><rect x="4" y="4" width="2" height="10" fill="#fdb824"/><rect x="7.500" y="6" width="2" height="8" fill="#fdb824"/><rect x="11" y="10" width="1.500" height="4" fill="#fdb824"/><path d="M4 14V4M6.500 14V4M9.500 14V6M11 14V10" stroke="#000" stroke-width="0.700"/><path d="M2 14V1.500M1.500 14H14" fill="none" stroke="#000" stroke-width="1.300"/><path d="M0.300 3L2 0L3.700 3Z M13 12.300L16 14L13 15.700Z" fill="#000"/></svg>
<svg class="i" style="left:788px;top:55px" width="16" height="16" viewBox="0 0 16 16"><rect x="0.5" y="0.5" width="11" height="15" fill="#b4c8ea" stroke="#000" stroke-width="1"/><path d="M1.0 15.0L5.45 6.8L11.0 15.0Z" fill="#96d468"/><rect x="5.500" y="3.500" width="10" height="9" fill="#fff" stroke="#000"/><rect x="5.500" y="3.500" width="10" height="2.500" fill="#000"/><rect x="7.500" y="7.500" width="2.500" height="3" fill="none" stroke="#000" stroke-width="0.800"/><rect x="11.500" y="7.500" width="2.500" height="3" fill="none" stroke="#000" stroke-width="0.800"/></svg>
<svg class="i" style="left:811px;top:55px" width="16" height="16" viewBox="0 0 16 16"><rect x="5" y="8" width="1.500" height="6" fill="#fdb824"/><rect x="8" y="3" width="1.500" height="11" fill="#fdb824"/><path d="M3.500 12L5.500 6L7.500 11L9.500 5L11.500 11L13.500 9" fill="none" stroke="#000" stroke-width="1"/><path d="M2 14V1.500M1.500 14H14" fill="none" stroke="#000" stroke-width="1.300"/><path d="M0.300 3L2 0L3.700 3Z M13 12.300L16 14L13 15.700Z" fill="#000"/></svg>
<svg class="i" style="left:834px;top:55px" width="16" height="16" viewBox="0 0 16 16"><rect x="0" y="0" width="6" height="7" fill="#fff"/><text x="0.300" y="6.300" font-family="Liberation Sans,sans-serif" font-size="7.500" font-weight="bold" fill="#000" stroke="#000" stroke-width="0.300">A</text><text x="-0.300" y="15.300" font-family="Liberation Sans,sans-serif" font-size="9" font-weight="bold" fill="#000" stroke="#000" stroke-width="0.500">A</text><path d="M8 12.500V5.500C8 2 10.500 1 15.500 1.300M6.500 8H15.500" fill="none" stroke="#000" stroke-width="2.400"/><text x="10.800" y="16" font-family="Liberation Sans,sans-serif" font-size="8" font-weight="bold" fill="#000" stroke="#000" stroke-width="0.500">A</text></svg>
<div style="left:189px;top:51px;width:1px;height:25px;background:#c8c8c8;"></div>
<div style="left:190px;top:51px;width:1px;height:25px;background:#fff;"></div>
<div style="left:194px;top:55px;width:2px;height:2px;background:#c3c3c3;"></div>
<div style="left:195px;top:56px;width:1px;height:1px;background:#fff;"></div>
<div style="left:194px;top:59px;width:2px;height:2px;background:#c3c3c3;"></div>
<div style="left:195px;top:60px;width:1px;height:1px;background:#fff;"></div>
<div style="left:194px;top:63px;width:2px;height:2px;background:#c3c3c3;"></div>
<div style="left:195px;top:64px;width:1px;height:1px;background:#fff;"></div>
<div style="left:194px;top:67px;width:2px;height:2px;background:#c3c3c3;"></div>
<div style="left:195px;top:68px;width:1px;height:1px;background:#fff;"></div>
<div style="left:194px;top:71px;width:2px;height:2px;background:#c3c3c3;"></div>
<div style="left:195px;top:72px;width:1px;height:1px;background:#fff;"></div>
<div style="left:408px;top:51px;width:1px;height:25px;background:#c8c8c8;"></div>
<div style="left:409px;top:51px;width:1px;height:25px;background:#fff;"></div>
<div style="left:413px;top:55px;width:2px;height:2px;background:#c3c3c3;"></div>
<div style="left:414px;top:56px;width:1px;height:1px;background:#fff;"></div>
<div style="left:413px;top:59px;width:2px;height:2px;background:#c3c3c3;"></div>
<div style="left:414px;top:60px;width:1px;height:1px;background:#fff;"></div>
<div style="left:413px;top:63px;width:2px;height:2px;background:#c3c3c3;"></div>
<div style="left:414px;top:64px;width:1px;height:1px;background:#fff;"></div>
<div style="left:413px;top:67px;width:2px;height:2px;background:#c3c3c3;"></div>
<div style="left:414px;top:68px;width:1px;height:1px;background:#fff;"></div>
<div style="left:413px;top:71px;width:2px;height:2px;background:#c3c3c3;"></div>
<div style="left:414px;top:72px;width:1px;height:1px;background:#fff;"></div>
<div style="left:673px;top:51px;width:1px;height:25px;background:#c8c8c8;"></div>
<div style="left:674px;top:51px;width:1px;height:25px;background:#fff;"></div>
<div style="left:679px;top:55px;width:2px;height:2px;background:#c3c3c3;"></div>
<div style="left:680px;top:56px;width:1px;height:1px;background:#fff;"></div>
<div style="left:679px;top:59px;width:2px;height:2px;background:#c3c3c3;"></div>
<div style="left:680px;top:60px;width:1px;height:1px;background:#fff;"></div>
<div style="left:679px;top:63px;width:2px;height:2px;background:#c3c3c3;"></div>
<div style="left:680px;top:64px;width:1px;height:1px;background:#fff;"></div>
<div style="left:679px;top:67px;width:2px;height:2px;background:#c3c3c3;"></div>
<div style="left:680px;top:68px;width:1px;height:1px;background:#fff;"></div>
<div style="left:679px;top:71px;width:2px;height:2px;background:#c3c3c3;"></div>
<div style="left:680px;top:72px;width:1px;height:1px;background:#fff;"></div>
<div style="left:592px;top:555px;width:341px;height:1px;background:#e3e3e3;"></div>
<div style="left:0px;top:567px;width:933px;height:1px;background:#a9a9a9;"></div>
<div style="left:0px;top:568px;width:933px;height:1px;background:#fbfbfb;"></div>
<div style="left:4px;top:575px;width:929px;height:1px;background:#828790;"></div>
<div style="left:4px;top:575px;width:1px;height:419px;background:#a0a0a0;"></div>
<div style="left:14px;top:580px;width:70px;height:92px;border-left:1px solid #fff;border-top:1px solid #fff;border-right:1px solid #a0a0a0;border-bottom:1px solid #a0a0a0;"></div>
<div style="left:17px;top:583px;width:64px;height:64px;background:#777;"></div>
<div class="u" style="top:654px;left:18px;"><span class="l">Image</span></div>
<div style="left:88px;top:580px;width:70px;height:92px;border-left:1px solid #fff;border-top:1px solid #fff;border-right:1px solid #a0a0a0;border-bottom:1px solid #a0a0a0;"></div>
<div style="left:91px;top:583px;width:64px;height:64px;background:#000;"></div>
<div class="u" style="top:654px;left:92px;"><span class="l">ImageFFT</span></div>
<div style="left:162px;top:580px;width:70px;height:92px;border-left:1px solid #fff;border-top:1px solid #fff;border-right:1px solid #a0a0a0;border-bottom:1px solid #a0a0a0;"></div>
<div style="left:165px;top:583px;width:64px;height:64px;background:#f18d27;"></div>
<div style="left:165px;top:583px;width:64px;height:64px;color:#fff;font:bold 49px/63px 'Liberation Sans',sans-serif;text-align:center;transform:scaleX(0.88)">?</div>
<div class="u" style="top:654px;left:166px;"><span class="l">PowerSpe</span></div>
<div style="left:236px;top:580px;width:70px;height:92px;border-left:1px solid #fff;border-top:1px solid #fff;border-right:1px solid #a0a0a0;border-bottom:1px solid #a0a0a0;"></div>
<div style="left:239px;top:583px;width:64px;height:64px;background:#f18d27;"></div>
<div style="left:239px;top:583px;width:64px;height:64px;color:#fff;font:bold 49px/63px 'Liberation Sans',sans-serif;text-align:center;transform:scaleX(0.88)">?</div>
<div class="u" style="top:654px;left:240px;"><span class="l">ImageSmo</span></div>
<div style="left:310px;top:580px;width:70px;height:92px;border-left:1px solid #fff;border-top:1px solid #fff;border-right:1px solid #a0a0a0;border-bottom:1px solid #a0a0a0;"></div>
<div style="left:313px;top:583px;width:64px;height:64px;background:#f18d27;"></div>
<div style="left:313px;top:583px;width:64px;height:64px;color:#fff;font:bold 49px/63px 'Liberation Sans',sans-serif;text-align:center;transform:scaleX(0.88)">?</div>
<div class="u" style="top:654px;left:314px;"><span class="l">Region</span></div>
<div style="left:384px;top:580px;width:70px;height:92px;border-left:1px solid #fff;border-top:1px solid #fff;border-right:1px solid #a0a0a0;border-bottom:1px solid #a0a0a0;"></div>
<div style="left:387px;top:583px;width:64px;height:64px;background:#f18d27;"></div>
<div style="left:387px;top:583px;width:64px;height:64px;color:#fff;font:bold 49px/63px 'Liberation Sans',sans-serif;text-align:center;transform:scaleX(0.88)">?</div>
<div class="u" style="top:654px;left:388px;"><span class="l">Connecte</span></div>
<div style="left:458px;top:580px;width:70px;height:92px;border-left:1px solid #fff;border-top:1px solid #fff;border-right:1px solid #a0a0a0;border-bottom:1px solid #a0a0a0;"></div>
<div style="left:461px;top:583px;width:64px;height:64px;background:#f18d27;"></div>
<div style="left:461px;top:583px;width:64px;height:64px;color:#fff;font:bold 49px/63px 'Liberation Sans',sans-serif;text-align:center;transform:scaleX(0.88)">?</div>
<div class="u" style="top:654px;left:462px;"><span class="l">Selected</span></div>
<div style="left:532px;top:580px;width:70px;height:92px;border-left:1px solid #fff;border-top:1px solid #fff;border-right:1px solid #a0a0a0;border-bottom:1px solid #a0a0a0;"></div>
<div style="left:535px;top:583px;width:64px;height:64px;background:#f18d27;"></div>
<div style="left:535px;top:583px;width:64px;height:64px;color:#fff;font:bold 49px/63px 'Liberation Sans',sans-serif;text-align:center;transform:scaleX(0.88)">?</div>
<div class="u" style="top:654px;left:536px;"><span class="l">RegionUn</span></div>
<div style="left:606px;top:580px;width:70px;height:92px;border-left:1px solid #fff;border-top:1px solid #fff;border-right:1px solid #a0a0a0;border-bottom:1px solid #a0a0a0;"></div>
<div style="left:609px;top:583px;width:64px;height:64px;background:#f18d27;"></div>
<div style="left:609px;top:583px;width:64px;height:64px;color:#fff;font:bold 49px/63px 'Liberation Sans',sans-serif;text-align:center;transform:scaleX(0.88)">?</div>
<div class="u" style="top:654px;left:610px;"><span class="l">ImageRed</span></div>
<div style="left:680px;top:580px;width:70px;height:92px;border-left:1px solid #fff;border-top:1px solid #fff;border-right:1px solid #a0a0a0;border-bottom:1px solid #a0a0a0;"></div>
<div style="left:683px;top:583px;width:64px;height:64px;background:#f18d27;"></div>
<div style="left:683px;top:583px;width:64px;height:64px;color:#fff;font:bold 49px/63px 'Liberation Sans',sans-serif;text-align:center;transform:scaleX(0.88)">?</div>
<div class="u" style="top:654px;left:684px;"><span class="l">LocalMax</span></div>
<div style="left:754px;top:580px;width:70px;height:92px;border-left:1px solid #fff;border-top:1px solid #fff;border-right:1px solid #a0a0a0;border-bottom:1px solid #a0a0a0;"></div>
<div style="left:757px;top:583px;width:64px;height:64px;background:#f18d27;"></div>
<div style="left:757px;top:583px;width:64px;height:64px;color:#fff;font:bold 49px/63px 'Liberation Sans',sans-serif;text-align:center;transform:scaleX(0.88)">?</div>
<div class="u" style="top:654px;left:758px;"><span class="l">RegionTr</span></div>
<div style="left:9px;top:576px;width:1px;height:97px;background:#828790;"></div>
<div style="left:9px;top:672px;width:924px;height:1px;background:#a0a0a0;"></div>
<div class="u" style="top:679px;left:13px;">控制变量</div>
<div style="left:77px;top:686px;width:856px;height:1px;background:#a0a0a0;"></div>
<div style="left:77px;top:687px;width:856px;height:1px;background:#fff;"></div>
<div style="left:9px;top:694px;width:924px;height:268px;background:#fff;border:1px solid #828790;"></div>
<div style="left:189px;top:695px;width:743px;height:30px;background:#fdfdfd;"></div>
<div class="u" style="top:702px;left:18px;"><span class="l">Scale</span></div>
<div class="k" style="top:703px;left:192px;color:#000;">[1.0, 0.65]</div>
<div style="left:189px;top:725px;width:743px;height:30px;background:#f5f5f5;"></div>
<div class="u" style="top:732px;left:18px;"><span class="l">MinGray</span></div>
<div class="k" style="top:733px;left:192px;color:#000;">[50, 100]</div>
<div style="left:189px;top:755px;width:743px;height:30px;background:#fdfdfd;"></div>
<div class="u" style="top:762px;left:18px;"><span class="l">Index</span></div>
<div class="k" style="top:763px;left:192px;color:#000;">0</div>
<div style="left:189px;top:785px;width:743px;height:30px;background:#f5f5f5;"></div>
<div class="u" style="top:792px;left:18px;"><span class="l">Width</span></div>
<div class="k" style="top:793px;left:192px;color:#000;">288</div>
<div style="left:189px;top:815px;width:743px;height:30px;background:#fdfdfd;"></div>
<div class="u" style="top:822px;left:18px;"><span class="l">Height</span></div>
<div class="k" style="top:823px;left:192px;color:#000;">518</div>
<div style="left:189px;top:845px;width:743px;height:30px;background:#f5f5f5;"></div>
<div class="u" style="top:852px;left:18px;"><span class="l">WindowHandle</span></div>
<div class="k" style="top:853px;left:192px;color:#000;">3600</div>
<div style="left:189px;top:875px;width:743px;height:30px;background:#fdfdfd;"></div>
<div class="u" style="top:882px;left:18px;"><span class="l">WindowHandle1</span></div>
<div class="k" style="top:883px;left:192px;color:#000;">3601</div>
<div style="left:189px;top:905px;width:743px;height:30px;background:#f5f5f5;"></div>
<div class="u" style="top:912px;left:18px;"><span class="l">HomMat2DIdentity</span></div>
<div class="k" style="top:913px;left:192px;color:#000;">?</div>
<div style="left:189px;top:935px;width:743px;height:26px;background:#fdfdfd;"></div>
<div class="u" style="top:942px;left:18px;"><span class="l">HomMat2DScale</span></div>
<div class="k" style="top:943px;left:192px;color:#000;">?</div>
<div style="left:188px;top:695px;width:1px;height:266px;background:#e4e4e4;"></div>
<div style="left:10px;top:962px;width:923px;height:6px;background:#f0f0f0;"></div>
<svg style="left:6.5px;top:966px" width="250" height="22" viewBox="0 0 250 22" fill="none" stroke="#444" stroke-width="1"><path d="M1.5 2.5 L6 13 Q8 18 13 18 L51 18 Q56 18 57 14 L61 2.5" fill="#fff"/><path d="M61.5 3 L65.5 13 Q67.5 17.5 72 17.5 L111 17.5 Q116 17.5 117 14 L121 3"/><path d="M121.5 3 L125.5 13 Q127.5 17.5 132 17.5 L171 17.5 Q176 17.5 177 14 L181 3"/><path d="M181.5 3 L185.5 13 Q187.5 17.5 192 17.5 L231 17.5 Q236 17.5 237 14 L241 3"/></svg>
<div class="u" style="top:968px;left:24px;">所有</div>
<div class="u" style="top:968px;left:84px;">自动</div>
<div class="u" style="top:968px;left:144px;">用户</div>
<div class="u" style="top:968px;left:204px;">全局</div>
<div style="left:0px;top:989px;width:933px;height:1px;background:#dcdcdc;"></div>
<div style="left:160px;top:993px;width:773px;height:1px;background:#3c3c3c;"></div>
<div style="left:0px;top:993px;width:160px;height:1px;background:#c8c8c8;"></div>
<div style="left:592px;top:76px;width:122px;height:458px;background:#3a3836;"></div>
<div style="left:1px;top:76px;width:296px;height:570px;background:#f0f0f0;"></div>
<div style="left:1px;top:76px;width:296px;height:22px;background:#ebebeb;"></div>
<div style="left:296px;top:76px;width:1px;height:570px;background:#dadada;"></div>
<div style="left:1px;top:645px;width:296px;height:1px;background:#dadada;"></div>
<svg style="left:5px;top:79px" width="17" height="17" viewBox="0 0 21 21"><circle cx="10.5" cy="10.5" r="10" fill="url(#hag)"/><text x="10.3" y="14.6" font-family="Liberation Sans,sans-serif" font-size="11.5" font-weight="bold" font-style="italic" fill="#fff" text-anchor="middle" letter-spacing="-0.8">HA</text></svg>
<div class="u" style="top:79px;left:56px;">图形窗口<span class="l">: 3600</span></div>
<div style="left:204px;top:88px;width:8px;height:2px;background:#000;"></div>
<div style="left:230px;top:81px;width:10px;height:9px;border:1px solid #000;border-top:2px solid #000;"></div>
<div style="left:248px;top:77px;width:45px;height:16px;background:#b9b9b9;"></div>
<svg style="left:266px;top:81px" width="9" height="9" viewBox="0 0 9 9"><path d="M1 1l7 7M8 1l-7 7" stroke="#fff" stroke-width="1.3" fill="none"/></svg>
<div style="left:5px;top:98px;width:288px;height:1px;background:#fafafa;"></div>
<svg class="i" style="left:10px;top:103px" width="16" height="16" viewBox="0 0 16 16"><rect x="0.700" y="1.700" width="10.600" height="11" fill="#fff" stroke="#000" stroke-width="1.400"/><rect x="0" y="1" width="12" height="3" fill="#000"/><path d="M3.500 11L15.500 1.500" stroke="#000" stroke-width="2.600"/><path d="M3.500 11L15.500 1.500" stroke="#8a5a1e" stroke-width="1.300"/><path d="M4.500 9.500L7 9L9.500 7L12 8.500L14.500 9.500L12.500 11.500L13 13.500L10 13L8.500 15.500L6.500 14L4 15.500L4.500 12.500L3 11Z" fill="#fbc630" stroke="#000" stroke-width="0.900" stroke-linejoin="round"/></svg>
<div style="left:33px;top:103px;width:1px;height:17px;background:#d0d0d0;"></div>
<div style="left:37px;top:100px;width:23px;height:22px;background:#cce4f7;border:1px solid #99d1ff;border-radius:3px;"></div>
<svg class="i" style="left:41px;top:103px" width="16" height="16" viewBox="0 0 16 16"><path d="M13.500 0.500L12.500 15L9.500 12L7.500 15.500L5 14.500L7 10.500L2.500 10.500Z" fill="#fff" stroke="#000" stroke-width="1.200" stroke-linejoin="miter"/></svg>
<svg class="i" style="left:63px;top:103px" width="16" height="16" viewBox="0 0 16 16"><g transform="translate(-1 0) scale(1.150 1) rotate(-8 8 8)"><path d="M4.500 15.500L1 9.500C0.500 8 2 7.500 3 8.500L4.500 10.500V3.500C4.500 2 6.500 2 6.500 3.500V2C6.500 0.500 8.500 0.500 8.500 2V3C8.500 1.500 10.500 1.500 10.500 3V5C10.500 3.500 12.500 3.500 12.500 5V11C12.500 13 11.500 14.500 11 15.500Z" fill="#fff" stroke="#000" stroke-width="1.400" stroke-linejoin="round"/><path d="M6.500 4V8M8.500 4V8M10.500 5V8" stroke="#000" stroke-width="0.900"/></g></svg>
<svg class="i" style="left:86px;top:103px" width="16" height="16" viewBox="0 0 16 16"><path d="M9.500 9.500L15 15" stroke="#000" stroke-width="3"/><path d="M9.800 9.800L14.600 14.600" stroke="#b07830" stroke-width="1.200"/><circle cx="6" cy="6" r="5.300" fill="#fff" stroke="#000" stroke-width="1"/><circle cx="6" cy="6" r="4.100" fill="#fff" stroke="#9bb3e0" stroke-width="1.500"/></svg>
<svg class="i" style="left:108px;top:103px" width="16" height="16" viewBox="0 0 16 16"><path d="M8.500 8.500L15 15" stroke="#000" stroke-width="3"/><path d="M9 9L14.600 14.600" stroke="#b07830" stroke-width="1.200"/><circle cx="5.500" cy="5.500" r="4.800" fill="#fff" stroke="#000" stroke-width="1.300"/><path d="M5.500 2.800V8.200M2.800 5.500H8.200" stroke="#000" stroke-width="1.900"/></svg>
<svg style="left:132px;top:109px" width="10" height="5" viewBox="0 0 10 5"><path d="M0 0h10l-5 5z" fill="#000"/></svg>
<div style="left:147px;top:103px;width:1px;height:17px;background:#d0d0d0;"></div>
<div class="u" style="top:102px;left:238px;"><span class="x2">»</span></div>
<div class="u" style="top:102px;left:255px;"><span class="x2">»</span></div>
<div style="left:250px;top:99px;width:1px;height:25px;background:#d8d8d8;"></div>
<div style="left:251px;top:99px;width:1px;height:25px;background:#fff;"></div>
<svg class="i" style="left:272px;top:103px" width="16" height="16" viewBox="0 0 16 16"><path d="M8 2C11 2 12.500 4 12.500 6.500C12.500 8.500 11 9.500 10.500 11H5.500C5 9.500 3.500 8.500 3.500 6.500C3.500 4 5 2 8 2Z" fill="#fff" stroke="#000" stroke-width="1.300"/><path d="M6.500 7V10M9.500 7V10M6.500 7H9.500" stroke="#000" stroke-width="0.800" fill="none"/><rect x="5.500" y="11.500" width="5" height="3.500" fill="#4a7ac8" stroke="#000" stroke-width="0.900"/></svg>
<svg style="left:5px;top:124px" width="288" height="518" viewBox="0 0 288 518"><use href="#fftimg"/></svg>
<div style="left:296px;top:76px;width:296px;height:570px;background:#f0f0f0;"></div>
<div style="left:296px;top:76px;width:296px;height:22px;background:#ebebeb;"></div>
<div style="left:591px;top:76px;width:1px;height:570px;background:#dadada;"></div>
<div style="left:296px;top:645px;width:296px;height:1px;background:#dadada;"></div>
<svg style="left:300px;top:79px" width="17" height="17" viewBox="0 0 21 21"><circle cx="10.5" cy="10.5" r="10" fill="url(#hag)"/><text x="10.3" y="14.6" font-family="Liberation Sans,sans-serif" font-size="11.5" font-weight="bold" font-style="italic" fill="#fff" text-anchor="middle" letter-spacing="-0.8">HA</text></svg>
<div class="u" style="top:79px;left:351px;">图形窗口<span class="l">: 3601</span></div>
<div style="left:499px;top:88px;width:8px;height:2px;background:#000;"></div>
<div style="left:525px;top:81px;width:10px;height:9px;border:1px solid #000;border-top:2px solid #000;"></div>
<div style="left:543px;top:77px;width:45px;height:16px;background:#b9b9b9;"></div>
<svg style="left:561px;top:81px" width="9" height="9" viewBox="0 0 9 9"><path d="M1 1l7 7M8 1l-7 7" stroke="#fff" stroke-width="1.3" fill="none"/></svg>
<div style="left:300px;top:98px;width:288px;height:1px;background:#fafafa;"></div>
<svg class="i" style="left:305px;top:103px" width="16" height="16" viewBox="0 0 16 16"><rect x="0.700" y="1.700" width="10.600" height="11" fill="#fff" stroke="#000" stroke-width="1.400"/><rect x="0" y="1" width="12" height="3" fill="#000"/><path d="M3.500 11L15.500 1.500" stroke="#000" stroke-width="2.600"/><path d="M3.500 11L15.500 1.500" stroke="#8a5a1e" stroke-width="1.300"/><path d="M4.500 9.500L7 9L9.500 7L12 8.500L14.500 9.500L12.500 11.500L13 13.500L10 13L8.500 15.500L6.500 14L4 15.500L4.500 12.500L3 11Z" fill="#fbc630" stroke="#000" stroke-width="0.900" stroke-linejoin="round"/></svg>
<div style="left:328px;top:103px;width:1px;height:17px;background:#d0d0d0;"></div>
<div style="left:332px;top:100px;width:23px;height:22px;background:#cce4f7;border:1px solid #99d1ff;border-radius:3px;"></div>
<svg class="i" style="left:336px;top:103px" width="16" height="16" viewBox="0 0 16 16"><path d="M13.500 0.500L12.500 15L9.500 12L7.500 15.500L5 14.500L7 10.500L2.500 10.500Z" fill="#fff" stroke="#000" stroke-width="1.200" stroke-linejoin="miter"/></svg>
<svg class="i" style="left:358px;top:103px" width="16" height="16" viewBox="0 0 16 16"><g transform="translate(-1 0) scale(1.150 1) rotate(-8 8 8)"><path d="M4.500 15.500L1 9.500C0.500 8 2 7.500 3 8.500L4.500 10.500V3.500C4.500 2 6.500 2 6.500 3.500V2C6.500 0.500 8.500 0.500 8.500 2V3C8.500 1.500 10.500 1.500 10.500 3V5C10.500 3.500 12.500 3.500 12.500 5V11C12.500 13 11.500 14.500 11 15.500Z" fill="#fff" stroke="#000" stroke-width="1.400" stroke-linejoin="round"/><path d="M6.500 4V8M8.500 4V8M10.500 5V8" stroke="#000" stroke-width="0.900"/></g></svg>
<svg class="i" style="left:381px;top:103px" width="16" height="16" viewBox="0 0 16 16"><path d="M9.500 9.500L15 15" stroke="#000" stroke-width="3"/><path d="M9.800 9.800L14.600 14.600" stroke="#b07830" stroke-width="1.200"/><circle cx="6" cy="6" r="5.300" fill="#fff" stroke="#000" stroke-width="1"/><circle cx="6" cy="6" r="4.100" fill="#fff" stroke="#9bb3e0" stroke-width="1.500"/></svg>
<svg class="i" style="left:403px;top:103px" width="16" height="16" viewBox="0 0 16 16"><path d="M8.500 8.500L15 15" stroke="#000" stroke-width="3"/><path d="M9 9L14.600 14.600" stroke="#b07830" stroke-width="1.200"/><circle cx="5.500" cy="5.500" r="4.800" fill="#fff" stroke="#000" stroke-width="1.300"/><path d="M5.500 2.800V8.200M2.800 5.500H8.200" stroke="#000" stroke-width="1.900"/></svg>
<svg style="left:427px;top:109px" width="10" height="5" viewBox="0 0 10 5"><path d="M0 0h10l-5 5z" fill="#000"/></svg>
<div style="left:442px;top:103px;width:1px;height:17px;background:#d0d0d0;"></div>
<div class="u" style="top:102px;left:533px;"><span class="x2">»</span></div>
<div class="u" style="top:102px;left:550px;"><span class="x2">»</span></div>
<div style="left:545px;top:99px;width:1px;height:25px;background:#d8d8d8;"></div>
<div style="left:546px;top:99px;width:1px;height:25px;background:#fff;"></div>
<div style="left:564px;top:100px;width:23px;height:22px;background:#cce4f7;border:1px solid #99d1ff;border-radius:3px;"></div>
<svg class="i" style="left:567px;top:103px" width="16" height="16" viewBox="0 0 16 16"><path d="M8 0V1.500M1.500 2L3 3.500M14.500 2L13 3.500M0 8H1.800M16 8H14.200M2 13L3.200 11.800M14 13L12.800 11.800" stroke="#000" stroke-width="1.100"/><path d="M8 2.500C11 2.500 12.500 4.500 12.500 6.800C12.500 8.700 11 9.700 10.500 11H5.500C5 9.700 3.500 8.700 3.500 6.800C3.500 4.500 5 2.500 8 2.500Z" fill="#fdc030" stroke="#000" stroke-width="1.300"/><path d="M6.500 7.500V10M9.500 7.500V10M6.500 7.500H9.500" stroke="#000" stroke-width="0.800" fill="none"/><rect x="5.500" y="11.500" width="5" height="3.500" fill="#4a7ac8" stroke="#000" stroke-width="0.900"/></svg>
<svg style="left:300px;top:124px" width="288" height="518" viewBox="0 0 288 518"><use href="#fftimg"/></svg>
<div style="left:296px;top:76px;width:1px;height:570px;background:#d4d4d4;"></div>
<div style="left:313px;top:137px;width:146px;height:20px;background:#fde6cf;border:1px solid #f5a85a;border-top-color:#fbd3a8;border-left-color:#fbd3a8;"></div>
<div class="o" style="top:137px;left:321px;">Fourier spectrum</div>
<div style="left:358px;top:618px;width:226px;height:20px;background:#fde6cf;border:1px solid #f5a85a;border-top-color:#fbd3a8;border-left-color:#fbd3a8;"></div>
<div class="o" style="top:618px;left:366px;">Press Run (F5) to continue</div>
<div style="left:933px;top:76px;width:966px;height:918px;background:#f0f0f0;"></div>
<div style="left:933px;top:76px;width:966px;height:22px;background:#ebebeb;"></div>
<div style="left:933px;top:97px;width:966px;height:1px;background:#e2e2e2;"></div>
<div class="u" style="top:79px;left:1251.5px;">程序窗口<span class="l"> - main () - </span>主线程<span class="l">: 16264</span></div>
<div style="left:1806px;top:88px;width:8px;height:2px;background:#000;"></div>
<div style="left:1833px;top:81px;width:10px;height:9px;border:1px solid #000;border-top:2px solid #000;"></div>
<div style="left:1851px;top:77px;width:45px;height:16px;background:#b9b9b9;"></div>
<svg style="left:1869px;top:81px" width="9" height="9" viewBox="0 0 9 9"><path d="M1 1l7 7M8 1l-7 7" stroke="#fff" stroke-width="1.3" fill="none"/></svg>
<div style="left:1000px;top:102px;width:770px;height:26px;background:#fdfdfd;border:1px solid #d0d0d0;border-bottom-color:#b5b5b5;border-radius:3px;"></div>
<svg style="left:1756px;top:113px" width="9" height="5" viewBox="0 0 9 5"><path d="M0.5 0.5h8l-4 4z" fill="#000"/></svg>
<svg class="i" style="left:1773px;top:107px" width="16" height="16" viewBox="0 0 16 16"><rect x="1.500" y="5.500" width="14" height="10" fill="#fff" stroke="#000"/><rect x="1.500" y="5.500" width="14" height="2.500" fill="#000"/><path d="M4 10.500h2M7.500 10.500h2M11 10.500h2M4 13h2M7.500 13h2M11 13h2" stroke="#000" stroke-width="1.500"/><path d="M2 2.500h5l-1 2.500z" fill="#808080"/><path d="M8 1.500h5v2h2l-3 2.500l-3-2.500h2v-1h-3z" fill="#1030e0"/></svg>
<div style="left:1797px;top:104px;width:23px;height:21px;background:#cce4f7;border:1px solid #99d1ff;border-radius:3px;"></div>
<div style="left:1820px;top:104px;width:23px;height:21px;background:#cce4f7;border:1px solid #99d1ff;border-radius:3px;"></div>
<div style="left:1843px;top:104px;width:23px;height:21px;background:#cce4f7;border:1px solid #99d1ff;border-radius:3px;"></div>
<svg class="i" style="left:1800px;top:107px" width="16" height="16" viewBox="0 0 16 16"><rect x="1.500" y="1.500" width="9" height="12" fill="#f0f0f0" stroke="#7c7c7c"/><path d="M3 4.5H8" stroke="#7c7c7c" stroke-width="1"/><path d="M3 6.5H8" stroke="#7c7c7c" stroke-width="1"/><path d="M3 8.5H8" stroke="#7c7c7c" stroke-width="1"/><path d="M3 10.5H8" stroke="#7c7c7c" stroke-width="1"/><path d="M6 11.500L13.500 1.500" stroke="#1030e0" stroke-width="3.200"/><path d="M5 13L7 10.500" stroke="#e8c820" stroke-width="2.800"/><path d="M4.500 13.500L5.500 12.500" stroke="#000" stroke-width="1.500"/><path d="M8.500 12L11 15L15.500 9.500" fill="none" stroke="#10a010" stroke-width="2"/></svg>
<svg class="i" style="left:1823px;top:107px" width="16" height="16" viewBox="0 0 16 16"><rect x="5.500" y="0.500" width="1.800" height="8.500" fill="#0b5fae" stroke="#000" stroke-width="0.600"/><path d="M8.500 0.500L13 4.500L8.500 8.500Z" fill="#1874c8" stroke="#000" stroke-width="0.600"/><path d="M0.500 11L4 7.500V9.500H12.500V7H14.500V12.500H4V14.500Z" fill="#0b5fae" stroke="#000" stroke-width="0.800"/><path d="M8.500 12L11 15L15.500 9.500" fill="none" stroke="#10a010" stroke-width="2"/></svg>
<svg class="i" style="left:1846px;top:107px" width="16" height="16" viewBox="0 0 16 16"><rect x="1.500" y="1.500" width="9" height="11" fill="#f0f0f0" stroke="#7c7c7c"/><path d="M3 4.5H8" stroke="#7c7c7c" stroke-width="1"/><path d="M3 6.5H8" stroke="#7c7c7c" stroke-width="1"/><path d="M3 8.5H8" stroke="#7c7c7c" stroke-width="1"/><path d="M6 9.500L12.500 1.500" stroke="#1030e0" stroke-width="3"/><path d="M5 10.500L6.500 8.500" stroke="#e8c820" stroke-width="2.600"/><rect x="4.500" y="10.500" width="7" height="5" fill="#f4f060" stroke="#000"/><path d="M6 12.500h3.500M6 14h3.500" stroke="#000" stroke-width="0.700"/><path d="M8.500 12L11 15L15.500 9.500" fill="none" stroke="#10a010" stroke-width="2"/></svg>
<svg class="i" style="left:1869px;top:107px" width="16" height="16" viewBox="0 0 16 16"><rect x="0.500" y="5.500" width="7" height="8" fill="#e0e0e0" stroke="#7c7c7c"/><path d="M2 8.5H6" stroke="#7c7c7c" stroke-width="1"/><path d="M2 10.5H6" stroke="#7c7c7c" stroke-width="1"/><path d="M7 5L11 1L15.500 5.500L11.500 9.500Z" fill="#e8d820" stroke="#000" stroke-width="1"/><path d="M4.500 12L8.500 8" stroke="#1030e0" stroke-width="2"/><path d="M10 10L15 15.500M15 10L10 15.500" stroke="#d01010" stroke-width="2"/></svg>
<div style="left:939px;top:132px;width:954px;height:855px;background:#fafafa;border:1px solid #828790;"></div>
<div style="left:1872px;top:133px;width:20px;height:832px;background:#f0f0f0;"></div>
<div style="left:1879px;top:292px;width:6px;height:314px;background:#868686;"></div>
<div style="left:940px;top:965px;width:952px;height:21px;background:#f0f0f0;"></div>
<div style="left:961px;top:973px;width:718px;height:6px;background:#868686;"></div>
<div style="left:940px;top:133px;width:932px;height:832px;overflow:hidden">
<div class="k" style="left:21px;top:62px;color:#9a9ab8;font-style:italic">22</div>
<div class="k" style="left:79px;top:62px;color:#8b5a2b">dev_open_window (0, 0, Width * Scale[Index], Height * Scale[Index], &#x27;black&#x27;, WindowHandle)</div>
<div class="k" style="left:21px;top:82px;color:#9a9ab8;font-style:italic">23</div>
<div class="k" style="left:79px;top:82px;color:#1874a8">set_display_font (WindowHandle, 14, &#x27;mono&#x27;, &#x27;true&#x27;, &#x27;false&#x27;)</div>
<div class="k" style="left:21px;top:102px;color:#9a9ab8;font-style:italic">24</div>
<div class="k" style="left:79px;top:102px;color:#8b5a2b">dev_set_part (0, 0, Height - 1, Width - 1)</div>
<div class="k" style="left:21px;top:122px;color:#9a9ab8;font-style:italic">25</div>
<div class="k" style="left:79px;top:122px;color:#8b5a2b">dev_display (Image)</div>
<div class="k" style="left:21px;top:142px;color:#9a9ab8;font-style:italic">26</div>
<div class="k" style="left:79px;top:142px;color:#1874a8">disp_message (WindowHandle, &#x27;Original image&#x27;, &#x27;image&#x27;, 12, 12, &#x27;black&#x27;, &#x27;true&#x27;)</div>
<div class="k" style="left:21px;top:162px;color:#9a9ab8;font-style:italic">27</div>
<div class="k" style="left:79px;top:162px;color:#0aa00a">* </div>
<div class="k" style="left:21px;top:182px;color:#9a9ab8;font-style:italic">28</div>
<div class="k" style="left:79px;top:182px;color:#0aa00a">* Perform fft and display spectrum</div>
<div class="k" style="left:21px;top:202px;color:#9a9ab8;font-style:italic">29</div>
<div class="k" style="left:79px;top:202px;color:#1a1aa6">optimize_fft_speed (Width, Height, &#x27;standard&#x27;)</div>
<div class="k" style="left:21px;top:222px;color:#9a9ab8;font-style:italic">30</div>
<div class="k" style="left:79px;top:222px;color:#0aa00a">* </div>
<div class="k" style="left:21px;top:242px;color:#9a9ab8;font-style:italic">31</div>
<div class="k" style="left:79px;top:242px;color:#0aa00a">* We used &#x27;fft_generic&#x27; &#x27;sqrt&#x27; and &#x27;dc_center&#x27; mainly</div>
<div class="k" style="left:21px;top:262px;color:#9a9ab8;font-style:italic">32</div>
<div class="k" style="left:79px;top:262px;color:#0aa00a">* for visualization purposes.</div>
<div class="k" style="left:21px;top:282px;color:#9a9ab8;font-style:italic">33</div>
<div class="k" style="left:79px;top:282px;color:#0aa00a">* To speed up the program, rft_generic should be used;</div>
<div class="k" style="left:21px;top:302px;color:#9a9ab8;font-style:italic">34</div>
<div class="k" style="left:79px;top:302px;color:#0aa00a">* but of course, the peak detection algorithm has to be</div>
<div class="k" style="left:21px;top:322px;color:#9a9ab8;font-style:italic">35</div>
<div class="k" style="left:79px;top:322px;color:#0aa00a">* adjusted in this case.</div>
<div class="k" style="left:21px;top:342px;color:#9a9ab8;font-style:italic">36</div>
<div class="k" style="left:79px;top:342px;color:#1a1aa6">fft_generic (Image, ImageFFT, &#x27;to_freq&#x27;, -1, &#x27;sqrt&#x27;, &#x27;dc_center&#x27;, &#x27;complex&#x27;)</div>
<div class="k" style="left:21px;top:362px;color:#9a9ab8;font-style:italic">37</div>
<div class="k" style="left:79px;top:362px;color:#8b5a2b">dev_open_window (0, Width * Scale[Index] + 7, Width * Scale[Index], Height * Scale[Index], &#x27;black&#x27;, WindowHandle1)</div>
<div class="k" style="left:21px;top:382px;color:#9a9ab8;font-style:italic">38</div>
<div class="k" style="left:79px;top:382px;color:#8b5a2b">dev_set_color (&#x27;red&#x27;)</div>
<div class="k" style="left:21px;top:402px;color:#9a9ab8;font-style:italic">39</div>
<div class="k" style="left:79px;top:402px;color:#8b5a2b">dev_set_draw (&#x27;margin&#x27;)</div>
<div class="k" style="left:21px;top:422px;color:#9a9ab8;font-style:italic">40</div>
<div class="k" style="left:79px;top:422px;color:#1874a8">set_display_font (WindowHandle1, 14, &#x27;mono&#x27;, &#x27;true&#x27;, &#x27;false&#x27;)</div>
<div class="k" style="left:21px;top:442px;color:#9a9ab8;font-style:italic">41</div>
<div class="k" style="left:79px;top:442px;color:#8b5a2b">dev_set_part (0, 0, Height - 1, Width - 1)</div>
<div class="k" style="left:21px;top:462px;color:#9a9ab8;font-style:italic">42</div>
<div class="k" style="left:79px;top:462px;color:#8b5a2b">dev_display (ImageFFT)</div>
<div class="k" style="left:21px;top:482px;color:#9a9ab8;font-style:italic">43</div>
<div class="k" style="left:79px;top:482px;color:#1874a8">disp_message (WindowHandle1, &#x27;Fourier spectrum&#x27;, &#x27;image&#x27;, 12, 12, &#x27;black&#x27;, &#x27;true&#x27;)</div>
<div class="k" style="left:21px;top:502px;color:#9a9ab8;font-style:italic">44</div>
<div class="k" style="left:79px;top:502px;color:#8000b0">disp_cont_message (WindowHandle1, &#x27;black&#x27;, &#x27;true&#x27;)</div>
<div class="k" style="left:21px;top:522px;color:#9a9ab8;font-style:italic">45</div>
<div class="k" style="left:79px;top:522px;color:#1a1aa6">stop ()</div>
<div class="k" style="left:21px;top:542px;color:#9a9ab8;font-style:italic">46</div>
<div class="k" style="left:79px;top:542px;color:#0aa00a">* </div>
<div class="k" style="left:21px;top:562px;color:#9a9ab8;font-style:italic">47</div>
<div class="k" style="left:79px;top:562px;color:#0aa00a">* Detect the eight most significant peaks in the spectrum</div>
<div class="k" style="left:21px;top:582px;color:#9a9ab8;font-style:italic">48</div>
<div class="k" style="left:79px;top:582px;color:#1a1aa6">power_real (ImageFFT, PowerSpectrum)</div>
<div class="k" style="left:21px;top:602px;color:#9a9ab8;font-style:italic">49</div>
<div class="k" style="left:79px;top:602px;color:#1a1aa6">binomial_filter (PowerSpectrum, ImageSmooth, 9, 9)</div>
<div class="k" style="left:21px;top:622px;color:#9a9ab8;font-style:italic">50</div>
<div class="k" style="left:79px;top:622px;color:#1a1aa6">threshold (ImageSmooth, Region, MinGray[Index], 100000)</div>
<div class="k" style="left:21px;top:642px;color:#9a9ab8;font-style:italic">51</div>
<div class="k" style="left:79px;top:642px;color:#1a1aa6">connection (Region, ConnectedRegions)</div>
<div class="k" style="left:21px;top:662px;color:#9a9ab8;font-style:italic">52</div>
<div class="k" style="left:79px;top:662px;color:#1a1aa6">select_shape (ConnectedRegions, SelectedRegions, &#x27;area&#x27;, &#x27;and&#x27;, 5, 200)</div>
<div class="k" style="left:21px;top:682px;color:#9a9ab8;font-style:italic">53</div>
<div class="k" style="left:79px;top:682px;color:#1a1aa6">union1 (SelectedRegions, RegionUnion)</div>
<div class="k" style="left:21px;top:702px;color:#9a9ab8;font-style:italic">54</div>
<div class="k" style="left:79px;top:702px;color:#1a1aa6">reduce_domain (ImageSmooth, RegionUnion, ImageReduced)</div>
<div class="k" style="left:21px;top:722px;color:#9a9ab8;font-style:italic">55</div>
<div class="k" style="left:79px;top:722px;color:#1a1aa6">local_max (ImageReduced, LocalMaxima)</div>
<div class="k" style="left:21px;top:742px;color:#9a9ab8;font-style:italic">56</div>
<div class="k" style="left:79px;top:742px;color:#0aa00a">* </div>
<div class="k" style="left:21px;top:762px;color:#9a9ab8;font-style:italic">57</div>
<div class="k" style="left:79px;top:762px;color:#0aa00a">* Next, detect peaks one octave higher, i.e., at twice</div>
<div class="k" style="left:21px;top:782px;color:#9a9ab8;font-style:italic">58</div>
<div class="k" style="left:79px;top:782px;color:#0aa00a">* the frequency of the most significant peaks</div>
<div class="k" style="left:21px;top:802px;color:#9a9ab8;font-style:italic">59</div>
<div class="k" style="left:79px;top:802px;color:#1a1aa6">shape_trans (LocalMaxima, RegionTrans, &#x27;convex&#x27;)</div>
<div class="k" style="left:21px;top:822px;color:#9a9ab8;font-style:italic">60</div>
<div class="k" style="left:79px;top:822px;color:#0aa00a">* Construct ROI band at twice the frequency</div>
<div style="left:41px;top:0;width:1px;height:832px;background:#c0c0c8"></div>
</div>
<div style="left:1896px;top:98px;width:3px;height:893px;background:#ebebeb;"></div>
<div style="left:1896px;top:98px;width:1px;height:893px;background:#dedede;"></div>
<div style="left:1899px;top:76px;width:1px;height:918px;background:#d4d4d4;"></div>
<div style="left:1900px;top:76px;width:21px;height:918px;background:#f0f0f0;"></div>
<div style="left:1900px;top:76px;width:1px;height:918px;background:#fcfcfc;"></div>
<div style="left:1908px;top:113px;width:6px;height:860px;background:#868686;"></div>
<div style="left:933px;top:992px;width:966px;height:1px;background:#d2d2d2;"></div>
<div style="left:933px;top:993px;width:966px;height:1px;background:#fafafa;"></div>
<div style="left:714px;top:76px;width:726px;height:883px;background:#cfa044;"></div>
<div style="left:715px;top:76px;width:724px;height:882px;background:#f18d27;"></div>
<div style="left:717px;top:80px;width:720px;height:876px;background:#d89c40;"></div>
<div style="left:718px;top:81px;width:718px;height:874px;background:#f4f4fa;"></div>
<div style="left:719px;top:82px;width:716px;height:872px;background:#f0f0f0;"></div>
<svg style="left:720px;top:76px" width="12" height="3" viewBox="0 0 12 3"><ellipse cx="6" cy="-1.5" rx="5" ry="4" fill="#fdebd3"/></svg>
<div style="left:1082px;top:76px;width:4px;height:1px;background:#222;"></div>
<div style="left:722px;top:85px;width:24px;height:389px;background:#fff;"></div>
<div style="left:752px;top:85px;width:680px;height:389px;background:#fff;"></div>
<div class="u" style="top:272px;left:845px;color:#f00000;"><span class="l">Images with complex or vector_field channels are not supported</span></div>
<div style="left:755px;top:480px;width:677px;height:28px;background:#fff;"></div>
<svg style="left:730px;top:482px" width="16" height="16" viewBox="0 0 16 16"><circle cx="8" cy="8" r="7.5" fill="#f59a2c"/><text x="8" y="12.3" font-family="Liberation Sans,sans-serif" font-weight="bold" font-size="12" fill="#fff" text-anchor="middle">?</text></svg>
<div style="left:723px;top:515px;width:15px;height:15px;background:#fbfbfb;border:1px solid #d4d4d4;border-bottom-color:#bcbcbc;border-radius:3px;"></div>
<svg style="left:726px;top:519px" width="9" height="6" viewBox="0 0 9 6"><path d="M1 5l3.5-3.5L8 5" fill="none" stroke="#000" stroke-width="1.4"/></svg>
<div class="u" style="top:514px;left:743px;">直方图选项</div>
<div style="left:822px;top:520px;width:610px;height:1px;background:#a0a0a0;"></div>
<div style="left:822px;top:521px;width:610px;height:1px;background:#fff;"></div>
<div class="u" style="top:544.5px;left:722px;">量子化</div>
<div style="left:858px;top:542px;width:128px;height:21px;background:#fff;border-bottom:1px solid #868686;"></div>
<div style="left:971px;top:544px;width:14px;height:16px;background:#f6f6f6;border:1px solid #dcdcdc;"></div>
<svg style="left:974px;top:546px" width="8" height="13" viewBox="0 0 8 13"><path d="M0.5 4.5h7l-3.5-4z M0.5 8.5h7l-3.5 4z" fill="#000"/></svg>
<div class="u" style="top:545px;left:860px;"><span class="l">1</span></div>
<div style="left:1005px;top:550px;width:253px;height:3px;background:#e7eaea;border:1px solid #d6d6d6;"></div>
<div style="left:993px;top:541px;width:12px;height:21px;background:#0078d7;"></div>
<div style="left:1265px;top:540px;width:127px;height:24px;background:#cce4f7;border:1px solid #0078d4;border-radius:4px;"></div>
<svg class="i" style="left:1271px;top:544px" width="16" height="16" viewBox="0 0 16 16"><rect x="0.500" y="1.500" width="10" height="14" fill="#f8c850" stroke="#5a3a10"/><path d="M2 4.5H8" stroke="#5a3a10" stroke-width="1"/><path d="M2 6.5H8" stroke="#5a3a10" stroke-width="1"/><path d="M2 8.5H8" stroke="#5a3a10" stroke-width="1"/><rect x="3" y="10" width="13" height="5.500" fill="#fff"/><text x="3.200" y="15" font-family="Liberation Sans,sans-serif" font-size="5.500" font-weight="bold" fill="#000" letter-spacing="-0.400">AUTO</text><path d="M7.500 3.500L10.500 7L15.500 0.500" fill="none" stroke="#30a010" stroke-width="2.200"/></svg>
<div class="u" style="top:545px;left:1292px;">自动选择</div>
<svg class="i" style="left:1407px;top:544px" width="16" height="16" viewBox="0 0 16 16"><path d="M2.500 15V2M0.500 4L2.500 1.500L4.500 4M1 14.500H14.500M13 12.500L15.500 14.500L13 16" fill="none" stroke="#000" stroke-width="1.200"/><path d="M3.500 14V12L6 9.500L9 11.500L12 10.500V14Z" fill="#fdb824" stroke="#000" stroke-width="0.800"/><ellipse cx="10.500" cy="5.500" rx="4.500" ry="4" fill="#fff" stroke="#000" stroke-width="1.300"/><path d="M8.500 4.500h4M8.500 6.500h4" stroke="#000" stroke-width="1"/></svg>
<div style="left:722px;top:573px;width:16px;height:16px;background:#0067c0;border-radius:3px;"></div>
<svg style="left:722px;top:573px" width="16" height="16" viewBox="0 0 16 16"><path d="M3.7 8.2l2.8 2.8 5.8-6" fill="none" stroke="#fff" stroke-width="1.3"/></svg>
<div class="u" style="top:573.5px;left:744px;">平滑</div>
<div style="left:858px;top:571px;width:128px;height:21px;background:#fff;border-bottom:1px solid #868686;"></div>
<div style="left:971px;top:573px;width:14px;height:16px;background:#f6f6f6;border:1px solid #dcdcdc;"></div>
<svg style="left:974px;top:575px" width="8" height="13" viewBox="0 0 8 13"><path d="M0.5 4.5h7l-3.5-4z M0.5 8.5h7l-3.5 4z" fill="#000"/></svg>
<div class="u" style="top:574px;left:860px;"><span class="l">0.00</span></div>
<div style="left:1005px;top:580px;width:253px;height:3px;background:#e7eaea;border:1px solid #d6d6d6;"></div>
<div style="left:993px;top:571px;width:12px;height:21px;background:#0078d7;"></div>
<div style="left:723px;top:601px;width:15px;height:15px;background:#fbfbfb;border:1px solid #d4d4d4;border-bottom-color:#bcbcbc;border-radius:3px;"></div>
<svg style="left:726px;top:605px" width="9" height="6" viewBox="0 0 9 6"><path d="M1 5l3.5-3.5L8 5" fill="none" stroke="#000" stroke-width="1.4"/></svg>
<div class="u" style="top:600px;left:743px;">范围筛选及代码生成</div>
<div style="left:882px;top:606px;width:550px;height:1px;background:#a0a0a0;"></div>
<div style="left:882px;top:607px;width:550px;height:1px;background:#fff;"></div>
<div style="left:722px;top:625px;width:710px;height:62px;background:#fff;border:1px solid #828790;"></div>
<div style="left:765px;top:626px;width:666px;height:30px;background:#bcdcf4;"></div>
<div style="left:741px;top:626px;width:1px;height:60px;background:#e2e2e2;"></div>
<div class="u" style="top:633px;left:820px;font-weight:bold;">操作</div>
<div class="u" style="top:633px;left:960px;font-weight:bold;">通道</div>
<div class="u" style="top:633px;left:1118px;font-weight:bold;">最小化</div>
<div class="u" style="top:633px;left:1312px;font-weight:bold;">最大化</div>
<div style="left:723px;top:656px;width:42px;height:30px;background:#f0f0f0;"></div>
<div style="left:765px;top:656px;width:665px;height:30px;background:#0078d7;"></div>
<div style="left:905px;top:656px;width:1px;height:30px;background:#d9ecfb;"></div>
<div style="left:1044px;top:656px;width:1px;height:30px;background:#d9ecfb;"></div>
<div style="left:1237px;top:656px;width:1px;height:30px;background:#d9ecfb;"></div>
<div class="u" style="top:663px;left:769px;color:#fff;">阈值</div>
<div class="u" style="top:663px;left:909px;color:#fff;"><span class="l">1</span></div>
<div class="u" style="top:663px;left:1048px;color:#fff;"><span class="l">0</span></div>
<div class="u" style="top:663px;left:1241px;color:#fff;"><span class="l">1</span></div>
<svg style="left:728px;top:636px" width="9" height="9" viewBox="0 0 9 9"><path d="M4.500 0.500v8M0.500 4.500h8" stroke="#000" stroke-width="2" fill="none"/></svg>
<div style="left:724px;top:657px;width:16px;height:27px;background:#fdfdfd;border:1px solid #d4d4d4;border-bottom-color:#bcbcbc;border-radius:4px;"></div>
<div style="left:728px;top:669px;width:8px;height:2px;background:#000;"></div>
<svg class="i" style="left:745px;top:662px" width="16" height="16" viewBox="0 0 16 16"><rect x="0.500" y="0.500" width="12" height="15" fill="#c8d4ec" stroke="#000"/><path d="M1 15L5.500 7.500L12 15Z" fill="#96d468"/><circle cx="5" cy="4" r="1" fill="#fdb824" stroke="#000" stroke-width="0.500"/><path d="M9.500 5.500L15.500 11.500M15.500 5.500L9.500 11.500" stroke="#e01818" stroke-width="1.800"/></svg>
<div style="left:723px;top:694px;width:91px;height:26px;background:#f7f7f7;border:1px solid #e6e6e6;border-radius:4px;"></div>
<div class="u" style="top:699px;left:738px;color:#a0a0a0;">插入代码</div>
<div style="left:821px;top:696px;width:548px;height:21px;background:#fdfdfd;border:1px solid #d9d9d9;border-bottom-color:#b9b9b9;border-radius:4px;"></div>
<svg style="left:1355px;top:704px" width="9" height="5" viewBox="0 0 9 5"><path d="M0.5 0.5h8l-4 4z" fill="#000"/></svg>
<div class="u" style="top:699px;left:825px;">无</div>
<div style="left:1375px;top:698px;width:16px;height:16px;background:#f5f5f5;border:1px solid #6b6b6b;border-radius:3px;"></div>
<div class="u" style="top:699px;left:1397px;">连接</div>
<div style="left:723px;top:730px;width:15px;height:15px;background:#fbfbfb;border:1px solid #d4d4d4;border-bottom-color:#bcbcbc;border-radius:3px;"></div>
<svg style="left:726px;top:734px" width="9" height="6" viewBox="0 0 9 6"><path d="M1 5l3.5-3.5L8 5" fill="none" stroke="#000" stroke-width="1.4"/></svg>
<div class="u" style="top:729px;left:743px;">输入和输出</div>
<div style="left:822px;top:735px;width:610px;height:1px;background:#a0a0a0;"></div>
<div style="left:822px;top:736px;width:610px;height:1px;background:#fff;"></div>
<div style="left:722px;top:757px;width:16px;height:16px;background:#0067c0;border-radius:3px;"></div>
<svg style="left:722px;top:757px" width="16" height="16" viewBox="0 0 16 16"><path d="M3.7 8.2l2.8 2.8 5.8-6" fill="none" stroke="#fff" stroke-width="1.3"/></svg>
<div class="u" style="top:757.5px;left:744px;">输入窗口</div>
<div style="left:815px;top:755px;width:333px;height:20px;background:#fdfdfd;border:1px solid #d9d9d9;border-bottom-color:#b9b9b9;border-radius:4px;"></div>
<svg style="left:1134px;top:763px" width="9" height="5" viewBox="0 0 9 5"><path d="M0.5 0.5h8l-4 4z" fill="#000"/></svg>
<div class="u" style="top:758px;left:819px;">激活</div>
<div class="u" style="top:758px;left:1175px;">颜色</div>
<div style="left:1225px;top:753px;width:207px;height:26px;background:#fdfdfd;border:1px solid #d9d9d9;border-bottom-color:#b9b9b9;border-radius:4px;"></div>
<svg style="left:1418px;top:764px" width="9" height="5" viewBox="0 0 9 5"><path d="M0.5 0.5h8l-4 4z" fill="#000"/></svg>
<div style="left:1233px;top:759px;width:15px;height:15px;background:#0000ff;"></div>
<div class="u" style="top:758px;left:1253px;"><span class="l">blue</span></div>
<div class="u" style="top:788px;left:749px;">输出窗口</div>
<div style="left:815px;top:785px;width:333px;height:20px;background:#fdfdfd;border:1px solid #d9d9d9;border-bottom-color:#b9b9b9;border-radius:4px;"></div>
<svg style="left:1134px;top:793px" width="9" height="5" viewBox="0 0 9 5"><path d="M0.5 0.5h8l-4 4z" fill="#000"/></svg>
<div class="u" style="top:788px;left:819px;">输入</div>
<div class="u" style="top:788px;left:1175px;">绘画</div>
<div style="left:1225px;top:784px;width:207px;height:25px;background:#fdfdfd;border:1px solid #d9d9d9;border-bottom-color:#b9b9b9;border-radius:4px;"></div>
<svg style="left:1418px;top:794px" width="9" height="5" viewBox="0 0 9 5"><path d="M0.5 0.5h8l-4 4z" fill="#000"/></svg>
<svg style="left:1233px;top:788px" width="15" height="15" viewBox="0 0 13 13"><path d="M2 8.5c-1.5-1.5 0-4 2-4.5c1-2.5 4-3.5 6-1.5c1.5 1.5 1 4-0.5 5c0 2.500-3 3.500-5 3.500c-1.500 0-2.500-1.200-2.500-2.500z" fill="#000"/></svg>
<div class="u" style="top:788px;left:1253px;"><span class="l">fill</span></div>
<div class="u" style="top:816px;left:1175px;">线宽度</div>
<div style="left:1226px;top:814px;width:206px;height:20px;background:#fff;border-bottom:1px solid #868686;"></div>
<div style="left:1417px;top:816px;width:14px;height:15px;background:#f6f6f6;border:1px solid #dcdcdc;"></div>
<svg style="left:1420px;top:818px" width="8" height="12" viewBox="0 0 8 12"><path d="M0.5 4.5h7l-3.5-4z M0.5 7.5h7l-3.5 4z" fill="#000"/></svg>
<div class="u" style="top:816px;left:1228px;"><span class="l">1</span></div>
<div style="left:723px;top:843px;width:15px;height:15px;background:#fbfbfb;border:1px solid #d4d4d4;border-bottom-color:#bcbcbc;border-radius:3px;"></div>
<svg style="left:726px;top:847px" width="9" height="6" viewBox="0 0 9 6"><path d="M1 5l3.5-3.5L8 5" fill="none" stroke="#000" stroke-width="1.4"/></svg>
<div class="u" style="top:842px;left:743px;">统计</div>
<div style="left:777px;top:848px;width:655px;height:1px;background:#a0a0a0;"></div>
<div style="left:777px;top:849px;width:655px;height:1px;background:#fff;"></div>
<div class="u" style="top:861px;right:846px;">灰度值</div>
<div class="u" style="top:861px;right:668px;">数目</div>
<div class="u" style="top:861px;right:490px;">百分比</div>
<div class="u" style="top:880px;left:723px;">峰值<span class="l">:</span></div>
<div class="u" style="top:880px;right:846px;"><span class="l">0</span></div>
<div class="u" style="top:880px;right:668px;"><span class="l">0</span></div>
<div class="u" style="top:880px;right:491px;"><span class="l">0 %</span></div>
<div class="u" style="top:899px;left:723px;">范围<span class="l">:</span></div>
<div class="u" style="top:899px;right:846px;"><span class="l">0 ... 0</span></div>
<div class="u" style="top:899px;right:668px;"><span class="l">0</span></div>
<div class="u" style="top:899px;right:491px;"><span class="l">100 %</span></div>
<div class="u" style="top:918px;left:723px;">选择<span class="l">:</span></div>
<div class="u" style="top:918px;right:846px;"><span class="l">0 ... 1</span></div>
<div class="u" style="top:918px;right:668px;"><span class="l">0</span></div>
<div class="u" style="top:918px;right:491px;"><span class="l">0 %</span></div>
<div class="u" style="top:937px;left:723px;">外部区域</div>
<div class="u" style="top:937px;right:668px;"><span class="l">0</span></div>
<div class="u" style="top:937px;right:491px;"><span class="l">100 %</span></div>
<div style="left:0px;top:994px;width:1921px;height:27px;background:#f0f0f0;"></div>
<svg class="i" style="left:4px;top:999px" width="16" height="16" viewBox="0 0 16 16"><path d="M1 3.500L4 1M2 6.500L7.500 2M1 15L5 11.500L7 12.500L10.500 9L9 7L12.500 3.500M9 15L15 10M11.500 14.500L15 12M5 8.500L7 7" fill="none" stroke="#a8a8a8" stroke-width="1.500"/><path d="M6 13L8 10.500L7 9L9 7" fill="none" stroke="#8a8a8a" stroke-width="1.800"/></svg>
<div style="left:22px;top:997px;width:1px;height:20px;background:#d5d5d5;"></div>
<div class="u" style="top:1000px;left:30px;">执行<span class="l"> 5.8 ms </span>中的<span class="l"> 61 </span>程序行<span class="l"> </span><span class="x3">–</span><span class="l"> </span>最后<span class="l">: disp_cont_message (3.5 ms)</span></div>
<div style="left:1279px;top:997px;width:1px;height:20px;background:#d5d5d5;"></div>
<div class="u" style="top:1000px;left:1288px;"><span class="l">[0] ImageFFT (#=1: 288</span><span class="x">×</span><span class="l">518</span><span class="x">×</span><span class="l">1</span><span class="x">×</span><span class="l">complex)</span></div>
<div style="left:1656px;top:997px;width:1px;height:20px;background:#d5d5d5;"></div>
<svg style="left:1662px;top:999px" width="9" height="17" viewBox="0 0 9 17"><defs><linearGradient id="gv" x1="0" y1="0" x2="0" y2="1"><stop offset="0" stop-color="#ffb010"/><stop offset="0.45" stop-color="#d89a30"/><stop offset="1" stop-color="#10408a"/></linearGradient></defs><rect x="0.5" y="0.5" width="8" height="16" fill="url(#gv)" stroke="#000"/></svg>
<div class="u" style="top:1000px;left:1678px;"><span class="l">(-8.6358,51.8915)</span></div>
<div style="left:1817px;top:997px;width:1px;height:20px;background:#d5d5d5;"></div>
<svg class="i" style="left:1821px;top:1000px" width="16" height="16" viewBox="0 0 16 16"><path d="M4 0.500V11M7.500 0.500V6M1 3.500H11M1 7H8" fill="none" stroke="#1a3a8a" stroke-width="1.300"/><path d="M1.500 9.500L4 12.500L6.500 9.500Z" fill="#1a3a8a"/><path d="M9.500 1L12 3.500L9.500 6Z" fill="#1a3a8a"/><text x="4.500" y="16" font-family="Liberation Sans,sans-serif" font-size="6" font-weight="bold" fill="#000">R</text><text x="9.500" y="11" font-family="Liberation Sans,sans-serif" font-size="6" font-weight="bold" fill="#000">C</text></svg>
<div class="u" style="top:1000px;left:1838px;"><span class="l">278, 153</span></div>
<div style="left:0px;top:1020px;width:96px;height:1px;background:#1c3c6c;"></div>
<div style="left:100px;top:1020px;width:30px;height:1px;background:#fafafa;"></div>
<div style="left:1839px;top:1020px;width:82px;height:1px;background:#16324e;"></div>
<div style="left:0px;top:0px;width:1px;height:1021px;background:#dbe4f0;"></div>
<div style="left:0px;top:150px;width:1px;height:209px;background:#c9cdd6;"></div>
<div style="left:0px;top:359px;width:1px;height:22px;background:#f3942f;"></div>
<div style="left:0px;top:690px;width:1px;height:130px;background:#5a8fd8;"></div>
</div>
</body></html>
